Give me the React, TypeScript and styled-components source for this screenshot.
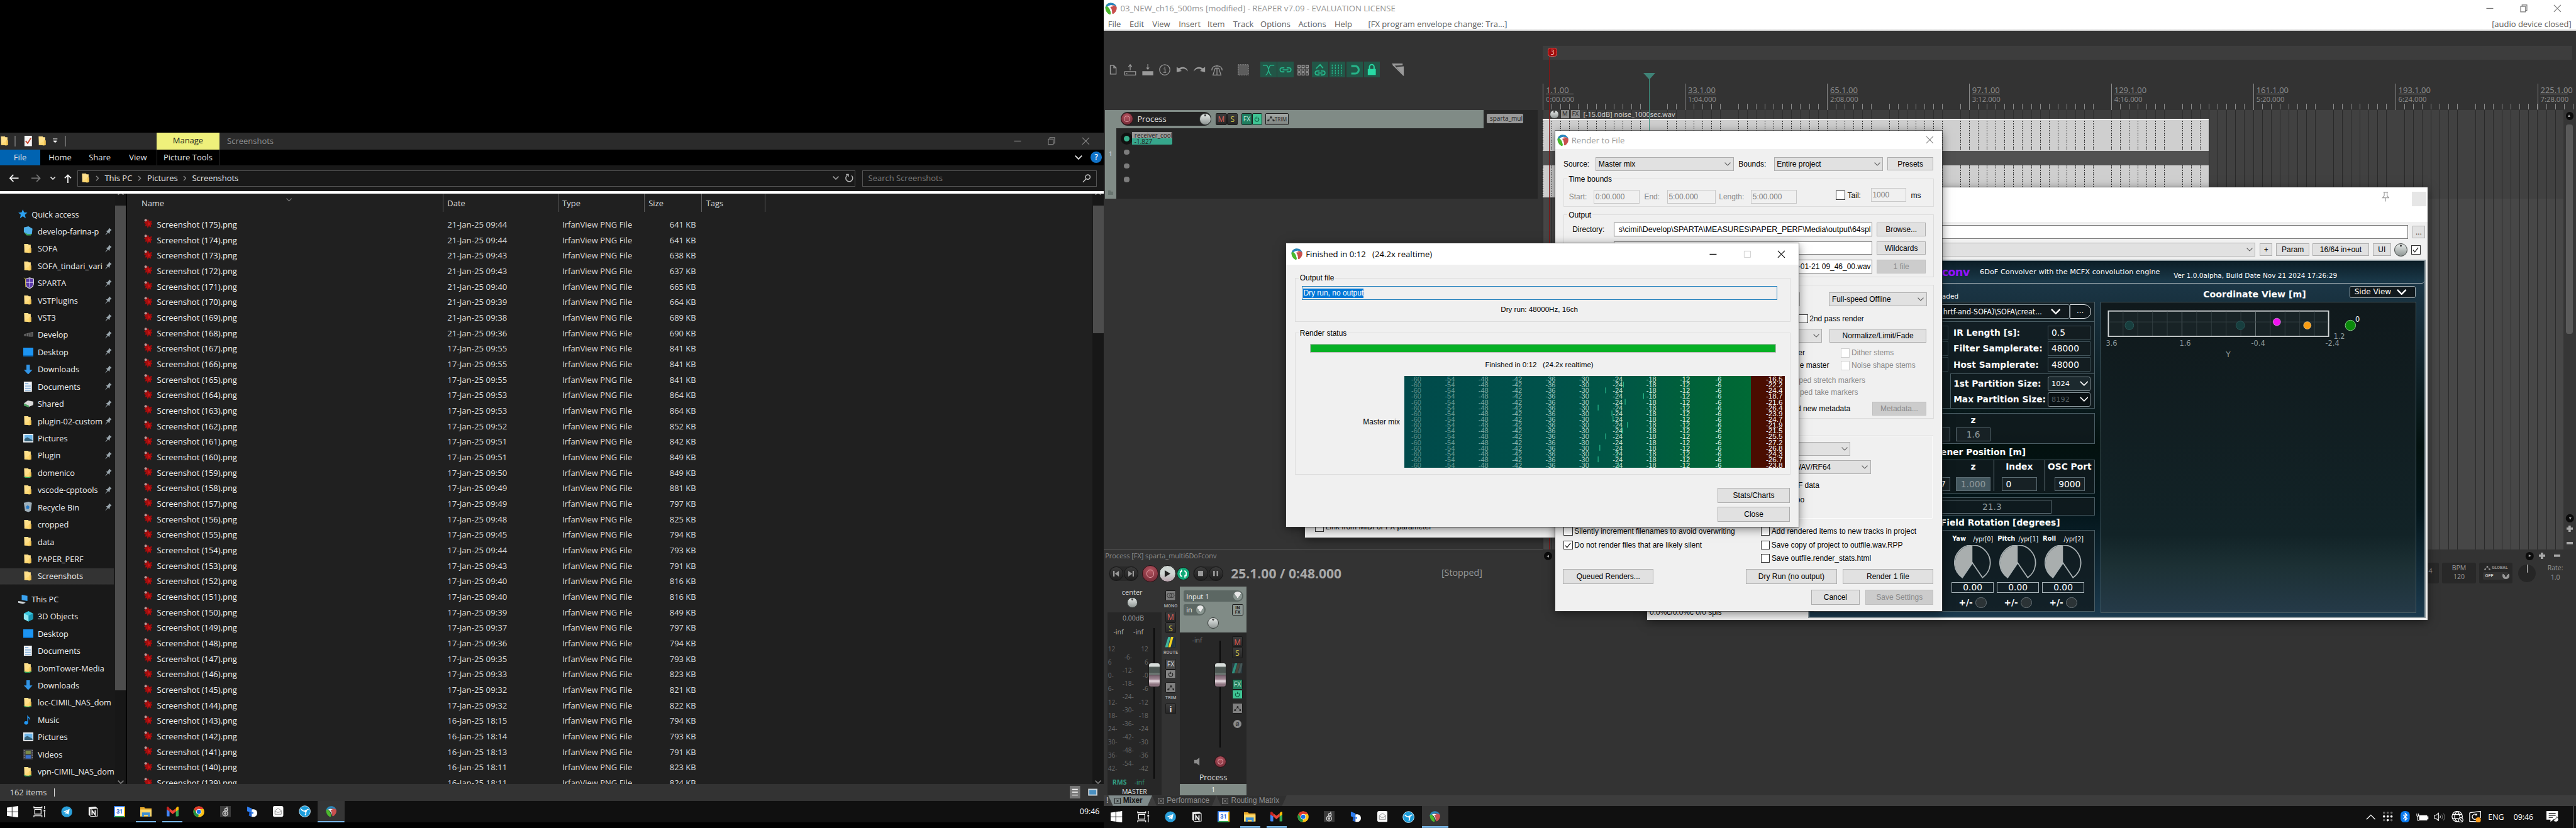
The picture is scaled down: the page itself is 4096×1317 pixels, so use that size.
import React from "react";
import styled, { createGlobalStyle, css } from "styled-components";

/* ---------- shared ---------- */

const Global = createGlobalStyle`
  * { box-sizing: border-box; }
  body { margin: 0; background: #000; overflow: hidden; }
  div, span, svg, button { flex-shrink: 0; }
`;

type Box = { $w?: number; $h?: number; $ml?: number; $mt?: number };
const box = css<Box>`
  ${(p) => p.$w !== undefined && `width: ${p.$w}px;`}
  ${(p) => p.$h !== undefined && `height: ${p.$h}px;`}
  ${(p) => p.$ml !== undefined && `margin-left: ${p.$ml}px;`}
  ${(p) => p.$mt !== undefined && `margin-top: ${p.$mt}px;`}
`;

const Desktop = styled.div`
  position: relative;
  display: flex;
  width: 4480px;
  height: 1440px;
  zoom: 0.9142857;
  overflow: hidden;
  background: #000;
  white-space: nowrap;
  font-family: "Open Sans", "Noto Sans", sans-serif;
  font-size: 14.2px;
`;

const ReaperLogo = ({ s = 20 }: { s?: number }) => (
  <svg width={s} height={s} viewBox="0 0 20 20">
    <path d="M10 .5C4.5.5.5 4.300.6 9.300c.2 4.200 3 8 6.500 10.200 1.400.6 2.400-.4 2.300-1.800C9 13 7.500 9.500 4.200 6.500 4.500 9 5 11.500 6.200 14 3 12 2 9 2.400 6.500z" fill="#3aa53a" />
    <path d="M.6 9C1 4 5 .4 10 .4c4.700 0 8.600 3 9.400 7.600C17 4.800 13 3.800 9.500 4.400 5.500 5 3 7.500 3 11z" fill="#2a86bd" />
    <path d="M1.200 7.500C.2 12 3 17.500 7.500 19.600c1.600.4 2.300-.9 2-2.300C8.800 13.500 7 9.500 3 6z" fill="#4cb82c" />
    <path d="M9.500 5.500c4-1.500 8-.8 9.800 2 .9 4-1.300 8.500-5 11-1.600.9-2.600 0-2.500-1.700.1-4-1-7.500-4-9.800z" fill="#c9504e" />
    <path d="M4.500 6.500c3-2 6.500-1.500 9 .5-2-.5-4-.2-5 .6 2 2 3 5 2.800 9.400C10.500 13 8.500 9 4.500 6.500z" fill="#fff" />
  </svg>
);

/* ---------- window controls ---------- */

const MinIcon = ({ c }: { c: string }) => (
  <svg width="14" height="14" viewBox="0 0 14 14"><path d="M0.500 7h12" stroke={c} strokeWidth="1.300" /></svg>
);
const RestoreIcon = ({ c }: { c: string }) => (
  <svg width="14" height="14" viewBox="0 0 14 14" fill="none" stroke={c} strokeWidth="1.200">
    <path d="M1 3.500h8.500V13H1zM3.500 3.500V1H12v9.500H9.500" />
  </svg>
);
const MaxIcon = ({ c }: { c: string }) => (
  <svg width="14" height="14" viewBox="0 0 14 14" fill="none" stroke={c}><path d="M1.500 1.500h11v11h-11z" /></svg>
);
const CloseIcon = ({ c }: { c: string }) => (
  <svg width="14" height="14" viewBox="0 0 14 14" fill="none" stroke={c} strokeWidth="1.200"><path d="M1 1l12 12M13 1L1 13" /></svg>
);
const Chevron = ({ c = "#444", w = 10, sw = 1.300 }: { c?: string; w?: number; sw?: number }) => (
  <svg width={w} height={w * 0.6} viewBox="0 0 10 6" fill="none" stroke={c} strokeWidth={sw}><path d="M.6.6L5 5 9.400.6" /></svg>
);

/* ---------- taskbar ---------- */

const Bar = styled.div`
  display: flex;
  align-items: stretch;
  height: 38px;
  background: #101010;
  color: #fff;
  font-size: 13.5px;
`;
const TaskItem = styled.div<{ $w?: number; $open?: boolean; $active?: boolean }>`
  width: ${(p) => p.$w ?? 46}px;
  display: flex;
  align-items: center;
  justify-content: center;
  background: ${(p) => (p.$active ? "#353535" : "transparent")};
  background-image: ${(p) => (p.$open || p.$active ? "linear-gradient(#7ab8ea, #7ab8ea)" : "none")};
  background-repeat: no-repeat;
  background-position: bottom center;
  background-size: ${(p) => (p.$active ? "100%" : "35px")} 3px;
`;
const Tray = styled.div`
  display: flex;
  align-items: center;
  margin-left: auto;
`;
const TrayItem = styled.div<{ $w: number }>`
  width: ${(p) => p.$w}px;
  display: flex;
  justify-content: center;
`;
const ShowDesktop = styled.div`
  width: 6px;
  height: 38px;
  margin-left: 9px;
  border-left: 1px solid #777;
`;

const IcoWin = () => (
  <svg width="20" height="20" viewBox="0 0 20 20" fill="#fff"><path d="M0 2.800L8.500 1.600V9.500H0zM9.500 1.500L20 0v9.500H9.500zM0 10.500h8.500v7.900L0 17.200zM9.500 10.500H20V20L9.500 18.500z" /></svg>
);
const IcoTaskView = () => (
  <svg width="22" height="20" viewBox="0 0 22 20" fill="none" stroke="#fff" strokeWidth="1.400">
    <path d="M2.500 6h11v8h-11zM1 .5V3h14V.5M1 19.500V17h14v2.500M19.500 0v5.500M19.500 10v10" /><path d="M18 6.500h3v3h-3z" fill="#fff" stroke="none" />
  </svg>
);
const IcoTelegram = () => (
  <svg width="20" height="20" viewBox="0 0 20 20"><circle cx="10" cy="10" r="9.500" fill="#2ba1dc" /><path d="M4 9.800l11-4.600-1.900 9.800-3.300-2.300-1.700 1.600-.3-2.900L12.500 7.500 6.600 11z" fill="#fff" /></svg>
);
const IcoNotion = () => (
  <svg width="18" height="20" viewBox="0 0 18 20"><path d="M1 2.200L13 1l4 3v14L4.500 19 1 15z" fill="#f4f4f4" /><path d="M4 5.500L16 4.600v12.500l-12 .8z" fill="#161616" /><path d="M7 15.500V8l5.500 7.500V7.500" stroke="#f4f4f4" strokeWidth="2" fill="none" /></svg>
);
const CalBox = styled.div`
  width: 20px;
  height: 20px;
  display: flex;
  align-items: center;
  justify-content: center;
  background: #fff;
  border: 3px solid #3f86ee;
  border-right-color: #f8bc15;
  border-bottom-color: #34a853;
  border-radius: 2px;
  color: #2a6fdb;
  font: bold 10px Roboto, sans-serif;
`;
const IcoExplorer = () => (
  <svg width="20" height="18" viewBox="0 0 20 18"><path d="M0 1h7l1.500 2H20v14H0z" fill="#e8a92a" /><path d="M0 5h20v12H0z" fill="#fcd769" /><path d="M3 10h14v7.500h-3.500v-3h-7v3H3z" fill="#3d8fd4" /></svg>
);
const IcoGmail = () => (
  <svg width="21" height="17" viewBox="0 0 21 17"><path d="M0 2v13.500C0 16.300.7 17 1.500 17H5V5.500z" fill="#4285f4" /><path d="M21 2v13.500c0 .8-.7 1.500-1.500 1.500H16V5.500z" fill="#34a853" /><path d="M16 3v5.500L21 5V2c0-2-2-2.500-3.500-1.300z" fill="#fbbc04" /><path d="M5 8.500V3l5.500 4L16 3v5.500L10.500 13z" fill="#ea4335" /><path d="M0 2v3l5 3.500V3L3.500.7C2-.5 0 0 0 2z" fill="#c5221f" /></svg>
);
const IcoChrome = () => (
  <svg width="20" height="20" viewBox="0 0 20 20"><circle cx="10" cy="10" r="9.500" fill="#fbc116" /><path d="M1.800 5.200A9.500 9.500 0 0 1 18.200 5.200L10 5.700 6 12z" fill="#e33b2e" /><path d="M1.800 5.200L6.500 13 10 14.500 8.800 19.400A9.500 9.500 0 0 1 1.800 5.200z" fill="#229342" /><circle cx="10" cy="10" r="4.700" fill="#fff" /><circle cx="10" cy="10" r="3.700" fill="#1a73e8" /></svg>
);
const IcoSpeaker8 = () => (
  <svg width="19" height="19" viewBox="0 0 19 19"><path d="M0 0h19v19H0z" fill="#3a3a3a" /><g fill="none" stroke="#cfcfcf" strokeWidth="1.600"><circle cx="9" cy="13" r="4.300" /><circle cx="9" cy="13" r="1.300" /><circle cx="10.500" cy="6.500" r="2.300" /><path d="M12 5V1" /></g></svg>
);
const IcoBlueB = () => (
  <svg width="19" height="20" viewBox="0 0 19 20"><path d="M1 1l8 3v8L1 9z" fill="#2c7df0" /><path d="M5 10l4 2v7l-5-2z" fill="#1d5fd0" /><path d="M9 6c6-1 9.500 1.500 9.500 6.500S14 20 9 18.500z" fill="#fff" /><circle cx="10.500" cy="12" r="1.600" fill="#2c7df0" /></svg>
);
const IcoEnvelope = () => (
  <svg width="18" height="19" viewBox="0 0 18 19"><rect width="18" height="19" rx="3" fill="#fafafa" /><path d="M3.500 8L9 4l5.500 4v6.500h-11zM3.500 8l3.500 3h4l3.500-3" fill="none" stroke="#8a8a8a" /></svg>
);
const IcoSync = () => (
  <svg width="21" height="21" viewBox="0 0 21 21"><circle cx="10.500" cy="10.500" r="9.700" fill="#1d9ddb" stroke="#cfeaf8" /><path d="M4 6.500c2.500 3 5 4 8 3.500M17 6.500c-2 1-4 2-5 3.500M11 17c1.500-2 1.800-4.500 1-7" stroke="#fff" strokeWidth="1.800" fill="none" /><circle cx="12" cy="10" r="2" fill="#fff" /></svg>
);

const apps = (
  <>
    <TaskItem $w={44}><IcoWin /></TaskItem>
    <TaskItem $w={49}><IcoTaskView /></TaskItem>
    <TaskItem><IcoTelegram /></TaskItem>
    <TaskItem><IcoNotion /></TaskItem>
    <TaskItem><CalBox>31</CalBox></TaskItem>
    <TaskItem $open><IcoExplorer /></TaskItem>
    <TaskItem $open><IcoGmail /></TaskItem>
    <TaskItem><IcoChrome /></TaskItem>
    <TaskItem><IcoSpeaker8 /></TaskItem>
    <TaskItem><IcoBlueB /></TaskItem>
    <TaskItem><IcoEnvelope /></TaskItem>
    <TaskItem><IcoSync /></TaskItem>
    <TaskItem $active><ReaperLogo s={19} /></TaskItem>
  </>
);

/* ---------- file explorer ---------- */

const LeftMonitor = styled.div`
  width: 1920px;
  height: 1440px;
  padding-top: 231px;
  display: flex;
  flex-direction: column;
`;
const ExTitle = styled.div`
  display: flex;
  align-items: center;
  height: 29px;
  background: #2b2b2b;
  color: #8f8f8f;
`;
const QuickTools = styled.div`
  display: flex;
  align-items: center;
  width: 272px;
`;
const QuickGap = styled.div<{ $w: number }>`
  width: ${(p) => p.$w}px;
`;
const VSep = styled.div<{ $ml: number }>`
  width: 2px;
  height: 18px;
  margin-left: ${(p) => p.$ml}px;
  border: solid #666;
  border-width: 0 1px;
`;
const ManageTab = styled.div`
  width: 110px;
  height: 29px;
  line-height: 27px;
  text-align: center;
  background: #eff07b;
  color: #1c1c1c;
`;
const TitleText = styled.div`
  margin-left: 13px;
`;
const WinButtons = styled.div<{ $gap: number; $mr: number }>`
  display: flex;
  align-items: center;
  margin-left: auto;
  margin-right: ${(p) => p.$mr}px;
  gap: ${(p) => p.$gap}px;
`;
const Ribbon = styled.div`
  display: flex;
  height: 28px;
  line-height: 28px;
  background: #000;
  color: #e4e4e4;
`;
const RibbonTab = styled.div<{ $w: number; $kind?: "file" | "context" }>`
  width: ${(p) => p.$w}px;
  text-align: center;
  background: ${(p) => (p.$kind === "file" ? "#0063b1" : "transparent")};
  border: ${(p) => (p.$kind === "context" ? "solid #2c2c2c" : "none")};
  border-width: 0 1px;
`;
const HelpDot = styled.div`
  width: 19px;
  height: 19px;
  margin: 4px 4px 0 15px;
  border-radius: 50%;
  background: #1173c9;
  color: #fff;
  text-align: center;
  font-size: 13px;
  font-weight: 600;
  line-height: 19px;
`;
const RibbonEnd = styled.div`
  display: flex;
  margin-left: auto;
  svg { margin-top: 10px; }
`;
const NavBar = styled.div`
  display: flex;
  align-items: center;
  height: 45px;
  padding-left: 15px;
  background: #191919;
  color: #e6e6e6;
`;
const NavIcons = styled.div`
  display: flex;
  align-items: center;
  width: 119.5px;
  gap: 16px;
  svg:nth-child(2) { margin-left: 5px; }
  svg:nth-child(4) { margin-left: -1px; }
`;
const Address = styled.div`
  display: flex;
  align-items: center;
  width: 1353px;
  height: 28px;
  padding: 0 2px 1px 5px;
  border: 1px solid #535353;
`;
const Crumb = styled.div<{ $w: number }>`
  display: flex;
  align-items: center;
  width: ${(p) => p.$w}px;
  svg { margin-right: 10px; }
`;
const SearchBox = styled.div`
  display: flex;
  align-items: center;
  justify-content: space-between;
  width: 408px;
  height: 28px;
  margin-left: 12.5px;
  padding: 0 10px 1px 9px;
  border: 1px solid #535353;
  color: #7a7a7a;
`;
const WhiteLine = styled.div`
  height: 3.500px;
  background: #fff;
`;
const ExBody = styled.div`
  display: flex;
  height: 1027.5px;
  overflow: hidden;
`;
const Sidebar = styled.div`
  width: 200px;
  padding-top: 21px;
  background: #191919;
  overflow: hidden;
  font-size: 13.9px;
`;
const SideItem = styled.div<{ $head?: boolean; $sel?: boolean; $mt?: number }>`
  display: flex;
  align-items: center;
  height: 30px;
  margin-top: ${(p) => p.$mt ?? 0}px;
  padding-left: ${(p) => (p.$head ? 32 : 40)}px;
  color: #f1f1f1;
  background: ${(p) => (p.$sel ? "linear-gradient(90deg,#333 198px,transparent 0) 0 1px / 100% 28px no-repeat" : "none")};
`;
const SideIcon = styled.div<{ $head?: boolean }>`
  width: ${(p) => (p.$head ? 23 : 25.5)}px;
  display: flex;
  align-items: center;
`;
const SideLabel = styled.div<{ $full?: boolean }>`
  width: ${(p) => (p.$full ? 134.5 : 117)}px;
`;
const ScrollTrack = styled.div<{ $w: number }>`
  width: ${(p) => p.$w}px;
  display: flex;
  flex-direction: column;
  align-items: center;
  background: #171717;
`;
const ScrollEnd = styled.div<{ $flip?: boolean }>`
  height: 21px;
  padding-top: 6px;
  transform: ${(p) => (p.$flip ? "none" : "scaleY(-1) translateY(4px)")};
`;
const Thumb = styled.div<{ $h: number }>`
  width: 19px;
  height: ${(p) => p.$h}px;
  margin-bottom: auto;
  background: #4d4d4d;
`;
const FilePane = styled.div`
  width: 1679px;
  margin-left: 2px;
  background: #202020;
`;
const ColHeads = styled.div`
  display: flex;
  height: 32px;
  margin-bottom: 8.5px;
  color: #dedede;
`;
const ColHead = styled.div<{ $w: number; $pl: number }>`
  display: flex;
  align-items: center;
  width: ${(p) => p.$w}px;
  padding: 2px 0 0 ${(p) => p.$pl}px;
  border-right: 1px solid #5e5e5e;
`;
const SortMark = styled.div`
  align-self: flex-start;
  margin: -3px 0 0 212px;
`;
const FileRow = styled.div`
  display: flex;
  align-items: center;
  height: 27px;
  padding-left: 28px;
  color: #f4f4f4;
`;
const FileName = styled.div`
  display: flex;
  align-items: center;
  width: 529px;
  svg { margin: -3px 8px 0 0; }
`;
const FileMeta = styled.div<{ $w: number; $right?: boolean; $num?: boolean }>`
  width: ${(p) => p.$w}px;
  text-align: ${(p) => (p.$right ? "right" : "left")};
  color: #dcdcdc;
  font-size: ${(p) => (p.$num ? 14.5 : 14.2)}px;
`;
const StatusBar = styled.div`
  display: flex;
  align-items: center;
  height: 29px;
  padding: 0 10px 0 17px;
  background: #333;
  color: #d8d8d8;
`;
const Caret = styled.div`
  width: 1px;
  height: 14px;
  margin: 0 auto 0 13px;
  background: #ddd;
`;

const Folder = ({ dot }: { dot?: boolean }) => (
  <svg width="16" height="18" viewBox="0 0 16 18">
    <path d="M1.500 1h7l1 1.500h3.500V16h-11z" fill="#ffe08a" /><path d="M10.500 8H14v8l-3.500 1z" fill="#f2c558" /><path d="M1.500 15l9 2V9z" fill="#ffd971" />
    {dot && <path d="M0 14c4 3 10 3 15 0l-3 3.500H3z" fill="#2fa85a" />}
  </svg>
);
const Irfan = () => (
  <svg width="16" height="18" viewBox="0 0 16 18">
    <path d="M3 1l3 2 3-.5 1 3 5-1.500-1.500 4.500L16 10l-3 2 .5 4-4-2-2 3.500L6 13l-3 1 1-4-3-2 2-2z" fill="#a30d0d" />
    <circle cx="4" cy="3.500" r="2.200" fill="#b99" /><path d="M8 6l4 4-3 3z" fill="#d01818" />
  </svg>
);
const Pin = () => (
  <svg width="12" height="14" viewBox="0 0 12 14" fill="#9aa6ad"><path d="M7 .5l4.500 4-2 1L8 8.500 8 11 5.200 8.700 1 13.500.5 13 4 7.800 1.500 5.800 4 5.600 6.300 3z" /></svg>
);
const sideGlyph: Record<string, React.ReactNode> = {
  folder: <Folder />,
  shared: <Folder dot />,
  net: <svg width="18" height="17" viewBox="0 0 18 17"><path d="M1 2l8-2 7 4-1 9-8 1-6-4z" fill="#4fb0ea" /><path d="M1 10c4 3 9 4 14 3l-2 3H6z" fill="#3da45e" /></svg>,
  sparta: <svg width="19" height="20" viewBox="0 0 19 20"><path d="M4 3l7-2 7 2v7c0 5-3 8-7 9.500C7 18 4 15 4 10z" fill="#5b3aa8" stroke="#ddd" strokeWidth="1.200" /><path d="M11 2v16M5 9h12" stroke="#e7e0ff" /><path d="M1 1l3 2v14" stroke="#c8b433" fill="none" /></svg>,
  dev: <svg width="19" height="14" viewBox="0 0 19 14"><path d="M1 6l16-4v8l-3 1-13-2z" fill="#6a6a6a" /><path d="M3 6v4M6 5v5M9 5v6M12 4v7M15 4v7" stroke="#2a2a2a" /></svg>,
  desktop: <svg width="18" height="15" viewBox="0 0 18 15"><path d="M0 0h18v15H0z" fill="#1c94f2" /><path d="M0 13h18v2H0z" fill="#0b6fc4" /></svg>,
  down: <svg width="17" height="17" viewBox="0 0 17 17"><path d="M5.500 0h6v9H16l-7.500 8L1 9h4.500z" fill="#3295e6" /></svg>,
  doc: <svg width="16" height="18" viewBox="0 0 16 18"><path d="M1 0h14v18H1z" fill="#f2f5f8" /><path d="M3 3h6M3 6h10M3 9h10M3 12h10M3 15h10" stroke="#4b8cc7" strokeWidth="1.200" /></svg>,
  drive: <svg width="18" height="14" viewBox="0 0 18 14"><path d="M1 6l7-5 10 2-1 6-7 3z" fill="#d9d9d9" /><path d="M1 6l9 4v3l-9-3z" fill="#4b9f5e" /></svg>,
  pic: <svg width="18" height="15" viewBox="0 0 18 15"><path d="M0 0h18v15H0z" fill="#eef3f7" /><path d="M2 2h14v11H2z" fill="#6db6ea" /><path d="M2 13V9l5-3 9 5v2z" fill="#36617a" /></svg>,
  bin: <svg width="16" height="18" viewBox="0 0 16 18"><path d="M1 2l8-2 6 2-2 14-4 2-6-2z" fill="#9fb0ba" /><path d="M5 8l3-2 3 3-2 4-4-1z" fill="#2879c4" /></svg>,
  pc: <svg width="18" height="17" viewBox="0 0 18 17"><path d="M6 1l10 2v9L6 10z" fill="#3aa2ef" /><path d="M0 12l8 1 5 2-5 2-8-2z" fill="#cfd6da" /></svg>,
  cube: <svg width="18" height="18" viewBox="0 0 18 18"><path d="M9 0l8 4v10l-8 4-8-4V4z" fill="#39c6dc" /><path d="M9 8l8-4v10l-8 4z" fill="#1b97b4" /><path d="M1 4l8 4v10l-8-4z" fill="#8fe6f0" /></svg>,
  music: <svg width="16" height="18" viewBox="0 0 16 18"><path d="M7 0c1 4 6 4 5 10-.5-2-2-4-3.500-4.500V14a3.500 3 0 1 1-1.500-2.500z" fill="#2196f3" /></svg>,
  video: <svg width="17" height="18" viewBox="0 0 17 18"><path d="M0 0h17v18H0z" fill="#3c3c44" /><path d="M4 2h9v6H4z" fill="#7a8a4a" /><path d="M4 10h9v6H4z" fill="#3b6ec8" /><path d="M1.500 1v16M15.500 1v16" stroke="#bbb" strokeDasharray="2 2" /></svg>,
};
const quick: [string, string, boolean?][] = [
  ["net", "develop-farina-p", true], ["folder", "SOFA", true], ["folder", "SOFA_tindari_vari", true], ["sparta", "SPARTA", true],
  ["folder", "VSTPlugins", true], ["folder", "VST3", true], ["dev", "Develop", true], ["desktop", "Desktop", true], ["down", "Downloads", true],
  ["doc", "Documents", true], ["drive", "Shared", true], ["folder", "plugin-02-custom", true], ["pic", "Pictures", true], ["folder", "Plugin", true],
  ["shared", "domenico", true], ["folder", "vscode-cpptools", true], ["bin", "Recycle Bin", true], ["folder", "cropped"], ["folder", "data"],
  ["folder", "PAPER_PERF"], ["folder", "Screenshots"],
];
const thisPc: [string, string][] = [
  ["cube", "3D Objects"], ["desktop", "Desktop"], ["doc", "Documents"], ["shared", "DomTower-Media"], ["down", "Downloads"],
  ["shared", "loc-CIMIL_NAS_dom"], ["music", "Music"], ["pic", "Pictures"], ["video", "Videos"], ["shared", "vpn-CIMIL_NAS_dom"],
];
const times = "21 09:44,21 09:44,21 09:43,21 09:43,21 09:40,21 09:39,21 09:38,21 09:36,17 09:55,17 09:55,17 09:55,17 09:53,17 09:53,17 09:52,17 09:51,17 09:51,17 09:50,17 09:49,17 09:49,17 09:48,17 09:45,17 09:44,17 09:43,17 09:40,17 09:40,17 09:39,17 09:37,17 09:36,17 09:35,17 09:33,17 09:32,17 09:32,16 18:15,16 18:14,16 18:13,16 18:11,16 18:11".split(",");
const sizes = [641, 641, 638, 637, 665, 664, 689, 690, 841, 841, 841, 864, 864, 852, 842, 849, 849, 881, 797, 825, 794, 793, 791, 816, 816, 849, 797, 794, 793, 823, 821, 822, 794, 793, 791, 823, 824];

const CrumbArrow = () => (
  <svg width="6" height="10" viewBox="0 0 6 10" fill="none" stroke="#8a8a8a" strokeWidth="1.500"><path d="M1 1l4 4-4 4" /></svg>
);

const Explorer = () => (
  <LeftMonitor>
    <ExTitle>
      <QuickTools>
        <Folder /><VSep $ml={9} /><QuickGap $w={14} />
        <svg width="15" height="18" viewBox="0 0 15 18"><path d="M1 0h13v18H1z" fill="#f5f5f5" /><path d="M3 9l3.500 4L12 4" stroke="#c8442a" strokeWidth="2" fill="none" /></svg>
        <QuickGap $w={10} /><Folder /><QuickGap $w={10} />
        <svg width="8" height="9" viewBox="0 0 8 9"><path d="M0 1h8M1 4.500l3 3 3-3z" fill="#fff" stroke="#fff" strokeWidth="1" /></svg>
        <VSep $ml={13} />
      </QuickTools>
      <ManageTab>Manage</ManageTab>
      <TitleText>Screenshots</TitleText>
      <WinButtons $gap={45} $mr={25}><MinIcon c="#8a8a8a" /><RestoreIcon c="#8a8a8a" /><CloseIcon c="#8a8a8a" /></WinButtons>
    </ExTitle>
    <Ribbon>
      <RibbonTab $w={70} $kind="file">File</RibbonTab>
      <RibbonTab $w={69}>Home</RibbonTab>
      <RibbonTab $w={69}>Share</RibbonTab>
      <RibbonTab $w={64}>View</RibbonTab>
      <RibbonTab $w={110} $kind="context">Picture Tools</RibbonTab>
      <RibbonEnd><Chevron c="#ddd" w={13} sw={1.500} /><HelpDot>?</HelpDot></RibbonEnd>
    </Ribbon>
    <NavBar>
      <NavIcons>
        <svg width="18" height="14" viewBox="0 0 18 14" fill="none" stroke="#fff" strokeWidth="1.800"><path d="M17 7H2M8 1L2 7l6 6" /></svg>
        <svg width="18" height="14" viewBox="0 0 18 14" fill="none" stroke="#777" strokeWidth="1.800"><path d="M1 7h15M10 1l6 6-6 6" /></svg>
        <Chevron c="#ddd" w={9} sw={2} />
        <svg width="13" height="16" viewBox="0 0 13 16" fill="none" stroke="#fff" strokeWidth="1.800"><path d="M6.500 16V2M1 7l5.500-5.500L12 7" /></svg>
      </NavIcons>
      <Address>
        <Crumb $w={25.5}><Folder /></Crumb>
        <Crumb $w={74}><CrumbArrow />This PC</Crumb>
        <Crumb $w={78}><CrumbArrow />Pictures</Crumb>
        <Crumb $w={96}><CrumbArrow />Screenshots</Crumb>
        <WinButtons $gap={9} $mr={0}>
          <Chevron c="#9a9a9a" w={11} sw={1.600} />
          <svg width="16" height="16" viewBox="0 0 16 16" fill="none" stroke="#b5b5b5" strokeWidth="1.600"><path d="M12 3.500A6 6 0 1 1 5 2.800M2.500 1.500h4v4" /></svg>
        </WinButtons>
      </Address>
      <SearchBox>
        Search Screenshots
        <svg width="15" height="15" viewBox="0 0 15 15" fill="none" stroke="#c4c4c4" strokeWidth="1.600"><circle cx="9.500" cy="5" r="4" /><path d="M6.800 8L1 14" /></svg>
      </SearchBox>
    </NavBar>
    <WhiteLine />
    <ExBody>
      <Sidebar>
        <SideItem $head><SideIcon $head><svg width="16" height="16" viewBox="0 0 16 16"><path d="M8 0l2.200 5.300 5.800.4-4.400 3.700L13 15.500 8 12l-5 3.500 1.400-6.100L0 5.700l5.800-.4z" fill="#2ba0f0" /></svg></SideIcon>Quick access</SideItem>
        {quick.map(([i, t, p]) => (
          <SideItem key={t} $sel={t === "Screenshots"}>
            <SideIcon>{sideGlyph[i]}</SideIcon><SideLabel>{t}</SideLabel>{p && <Pin />}
          </SideItem>
        ))}
        <SideItem $head $mt={10}><SideIcon $head>{sideGlyph.pc}</SideIcon>This PC</SideItem>
        {thisPc.map(([i, t]) => (
          <SideItem key={t}><SideIcon>{sideGlyph[i]}</SideIcon><SideLabel $full>{t}</SideLabel></SideItem>
        ))}
      </Sidebar>
      <ScrollTrack $w={19}>
        <ScrollEnd><Chevron c="#7a7a7a" w={11} sw={1.800} /></ScrollEnd>
        <Thumb $h={844} />
        <ScrollEnd $flip><Chevron c="#7a7a7a" w={11} sw={1.800} /></ScrollEnd>
      </ScrollTrack>
      <FilePane>
        <ColHeads>
          <ColHead $w={550} $pl={25}>Name<SortMark><Chevron c="#7a7a7a" w={10} /></SortMark></ColHead>
          <ColHead $w={200} $pl={7}>Date</ColHead>
          <ColHead $w={150} $pl={7}>Type</ColHead>
          <ColHead $w={100} $pl={7}>Size</ColHead>
          <ColHead $w={110} $pl={7}>Tags</ColHead>
        </ColHeads>
        {sizes.map((kb, i) => {
          const [d, t] = times[i].split(" ");
          return (
            <FileRow key={i}>
              <FileName><Irfan />Screenshot ({175 - i}).png</FileName>
              <FileMeta $w={200} $num>{d}-Jan-25 {t}</FileMeta>
              <FileMeta $w={150}>IrfanView PNG File</FileMeta>
              <FileMeta $w={82.5} $right>{kb} KB</FileMeta>
            </FileRow>
          );
        })}
      </FilePane>
      <ScrollTrack $w={20}>
        <ScrollEnd><Chevron c="#7a7a7a" w={11} sw={1.800} /></ScrollEnd>
        <Thumb $h={222} />
        <ScrollEnd $flip><Chevron c="#7a7a7a" w={11} sw={1.800} /></ScrollEnd>
      </ScrollTrack>
    </ExBody>
    <StatusBar>
      162 items<Caret />
      <svg width="50" height="22" viewBox="0 0 50 22"><path d="M0 0h18v22H0z" fill="#777" /><path d="M4 6h10M4 11h10M4 16h10" stroke="#fff" strokeWidth="1.500" /><path d="M32 5h16v12H32z" fill="#cfd6da" /><path d="M34 7h12v8H34z" fill="#4a8fc0" /></svg>
    </StatusBar>
    <Bar>{apps}<Tray><TrayItem $w={50}>09:46</TrayItem></Tray></Bar>
  </LeftMonitor>
);

/* ---------- REAPER main window ---------- */

const RightMonitor = styled.div`
  width: 2560px;
  height: 1440px;
  background: #333;
  color: #999;
`;
const RTitle = styled.div`
  display: flex;
  align-items: center;
  height: 29px;
  padding-left: 2px;
  background: #fff;
  color: #939393;
  font-size: 14.4px;
`;
const RTitleText = styled.div`margin-left: 5.5px;`;
const RMenu = styled.div`
  display: flex;
  height: 25px;
  line-height: 25px;
  padding-left: 7px;
  background: #fff;
  border-bottom: 3px solid #e9e9e9;
  border-image: linear-gradient(#f4f4f4, #d0d0d0) 1;
  color: #5c5c5c;
`;
const MenuItem = styled.div<{ $w: number }>`width: ${(p) => p.$w}px;`;
const AudioNote = styled.div`
  margin: 0 8px 0 auto;
`;
const RTop = styled.div`
  display: flex;
  height: 902px;
`;
const TcpColumn = styled.div`
  width: 763.5px;
  border-bottom: 1px solid #585858;
`;
const Toolbar = styled.div`
  display: flex;
  align-items: center;
  height: 28px;
  margin-top: 53px;
  padding-left: 2px;
  gap: 2px;
`;
const Tool = styled.div<{ $on?: boolean; $ml?: number }>`
  display: flex;
  align-items: center;
  justify-content: center;
  width: 28px;
  height: 28px;
  margin-left: ${(p) => p.$ml ?? 0}px;
  background: ${(p) => (p.$on ? "#225647" : "transparent")};
  color: ${(p) => (p.$on ? "#27b489" : "#9a9a9a")};
`;
const toolSvg = (d: string, fill = false, sw = 1.400) => (
  <svg width="22" height="22" viewBox="0 0 22 22" fill={fill ? "currentColor" : "none"} stroke="currentColor" strokeWidth={fill ? 0 : sw}><path d={d} /></svg>
);
const TrackPanel = styled.div`
  display: flex;
  height: 154.5px;
  margin: 56px 9px 0 2px;
  background: #262626;
`;
const TrackEdge = styled.div`
  width: 19px;
  display: flex;
  flex-direction: column;
  align-items: center;
  padding-top: 67px;
  background: #808b86;
  color: #e8e8e8;
  font-size: 10px;
  line-height: 20px;
  svg { margin-top: 53px; }
`;
const TrackMain = styled.div`width: 639px;`;
const TrackBar = styled.div`
  display: flex;
  align-items: center;
  height: 32px;
  padding-left: 8px;
  background: #808b86;
`;
const NamePill = styled.div`
  display: flex;
  align-items: center;
  width: 158px;
  height: 24px;
  border-radius: 12px;
  background: #232323;
  color: #e6e6e6;
  font-size: 14px;
`;
const NameText = styled.div`width: 108px; margin-left: 7px;`;
const RecDot = styled.div<{ $s: number }>`
  width: ${(p) => p.$s}px;
  height: ${(p) => p.$s}px;
  display: flex;
  align-items: center;
  justify-content: center;
  border-radius: 50%;
  background: radial-gradient(circle at 50% 30%, #b45560, #7c2f3b 75%);
  border: 1px solid #2a1216;
  &::after {
    content: "";
    width: 42%;
    height: 42%;
    border-radius: 50%;
    border: 2px solid #e2a0a8;
  }
`;
const Knob = styled.div<{ $s: number }>`
  width: ${(p) => p.$s}px;
  height: ${(p) => p.$s}px;
  border-radius: 50%;
  background: radial-gradient(circle at 50% 15%, #444 0 1.500px, transparent 2px), linear-gradient(#e8ecea, #8f9694);
  border: 1px solid #3a3f3d;
`;
const Mini = styled.div<{ $bg?: string; $c?: string; $fs?: number } & Box>`
  ${box}
  display: flex;
  align-items: center;
  justify-content: center;
  border: 1px solid #1a1a1a;
  border-radius: 2px;
  background: ${(p) => p.$bg ?? "linear-gradient(#3c3c3c, #262626)"};
  color: ${(p) => p.$c ?? "#ccc"};
  font: ${(p) => p.$fs ?? 13}px "Open Sans", sans-serif;
`;
const ParamRow = styled.div`
  display: flex;
  align-items: center;
  height: 22px;
  margin: 7px 0 0 8px;
`;
const ParamKnob = styled.div`
  width: 21px;
  height: 21px;
  border-radius: 50%;
  border: 6px solid #111;
  background: #38b08c;
`;
const ParamLabel = styled.div`
  width: 70px;
  margin-left: -1px;
  padding-left: 4px;
  background: linear-gradient(#999 50%, #36a78c 50%);
  color: #222;
  font-size: 10.8px;
  line-height: 11px;
  border-radius: 0 2px 2px 0;
`;
const SendDots = styled.div`
  display: flex;
  flex-direction: column;
  gap: 15px;
  margin: 8px 0 0 14px;
`;
const SendDot = styled.div`
  width: 9px;
  height: 9px;
  border-radius: 50%;
  background: #7c7c7c;
`;
const SpartaTag = styled.div`
  width: 63px;
  height: 17px;
  margin: 6.5px 0 0 6px;
  padding-left: 5px;
  border-radius: 2px;
  background: #999;
  color: #222;
  font-size: 11px;
  line-height: 16px;
`;
const Arrange = styled.div`
  position: relative;
  width: 1796.5px;
`;
const MarkerLane = styled.div`
  width: 1790px;
  height: 24px;
  margin-top: 26px;
  padding: 3px 0 0 8.5px;
  background: #3d3d3d;
`;
const Marker = styled.div`
  width: 16px;
  height: 16px;
  border: 1px solid #e05b5b;
  border-radius: 5px;
  background: #a10b0b;
  color: #ffd0d0;
  text-align: center;
  font-size: 11px;
  line-height: 14px;
`;
const Ruler = styled.div`
  display: flex;
  width: 1796.5px;
  height: 46px;
  margin-top: 41px;
  overflow: hidden;
  background: repeating-linear-gradient(90deg, #8a8a8a 0 1px, transparent 1px 15.444px) 0 36px / 100% 10px no-repeat;
`;
const RulerMark = styled.div`
  width: 247.1px;
  padding-left: 4px;
  border-left: 1px solid #8a8a8a;
  color: #8e8e8e;
`;
const BarNo = styled.div`
  width: 48px;
  height: 19px;
  border-bottom: 1px solid #8a8a8a;
  font-size: 14.2px;
  line-height: 22px;
`;
const BarTime = styled.div`
  font-size: 12.4px;
  line-height: 17px;
`;
const GridArea = styled.div`
  width: 1774.5px;
  height: 765px;
  background: repeating-linear-gradient(90deg, #2a2a2a 0 1px, transparent 1px 15.444px), linear-gradient(#414141 154px, #474747 0);
`;
const MediaItem = styled.div`
  width: 1158px;
  height: 153px;
  background: repeating-linear-gradient(90deg, #2f2f2f 0 1px, transparent 1px 15.444px), #3e3e3e;
`;
const ItemLabel = styled.div`
  display: flex;
  align-items: center;
  height: 16px;
  padding-left: 12px;
  color: #d8d8d8;
  font-size: 12px;
`;
const ItemTag = styled.div`
  height: 14px;
  margin-left: 3.5px;
  padding: 0 2px;
  background: #8b8b8b;
  color: #222;
  font-size: 10.5px;
  line-height: 14px;
`;
const ItemName = styled.div`margin-left: 6px;`;
const Wave = styled.div<{ $top?: boolean }>`
  height: 56px;
  border-top: ${(p) => (p.$top ? "3px solid #fff" : "none")};
  background:
    repeating-linear-gradient(0deg, #cfcfcf 0 2px, transparent 2px 4px),
    repeating-linear-gradient(90deg, #333 0 1px, transparent 1px 15.444px),
    #cfcfcf;
`;
const WaveGap = styled.div`
  height: 25px;
  background: #515151;
`;
const PlayLine = styled.div`
  position: absolute;
  left: 10px;
  top: 46px;
  width: 1.500px;
  height: 856px;
  background: #8c1212;
`;
const EditCursor = styled.div`
  position: absolute;
  left: 174.5px;
  top: 73px;
  width: 21px;
  height: 830px;
  background: linear-gradient(#3d9583, #3d9583) 10px 0 / 1.200px 100% no-repeat;
  &::before {
    content: "";
    display: block;
    border: 10.500px solid transparent;
    border-top: 11px solid #3f8377;
    border-bottom: 0;
  }
`;
const VScroll = styled.div`
  position: absolute;
  right: 0;
  top: 137px;
  width: 22px;
  height: 765px;
  padding-bottom: 6px;
  display: flex;
  flex-direction: column;
  align-items: center;
  background: #363636;
`;
const ArrowBtn = styled.div<{ $rot: number; $mt?: number; $ml?: number }>`
  width: 14px;
  height: 14px;
  margin: ${(p) => p.$mt ?? 0}px 0 0 ${(p) => p.$ml ?? 0}px;
  padding: 4px 0 0 4px;
  border-radius: 50%;
  background: #0c0c0c;
  transform: rotate(${(p) => p.$rot}deg);
  &::before {
    content: "";
    display: block;
    width: 0;
    border: 3px solid transparent;
    border-bottom: 5px solid #a8a8a8;
    border-top: 0;
  }
`;
const VThumb = styled.div`
  width: 12px;
  height: 364px;
  margin: 8px 0 auto;
  border-radius: 4px;
  background: #5a5a5a;
`;
const PlusMinus = styled.div<{ $plus?: boolean; $ml?: number; $mt?: number }>`
  width: 11px;
  height: 11px;
  margin: ${(p) => p.$mt ?? 0}px 0 0 ${(p) => p.$ml ?? 0}px;
  background:
    linear-gradient(#aaa, #aaa) center / 11px 4px no-repeat,
    linear-gradient(#aaa, #aaa) center / ${(p) => (p.$plus ? "4px 11px" : "0 0")} no-repeat;
`;

const RBottom = styled.div`
  display: flex;
  height: 428px;
`;
const MixSide = styled.div`width: 763.5px;`;
const FocusedFx = styled.div`
  height: 22px;
  padding-left: 2px;
  color: #8d8d8d;
  font-size: 11.900px;
  line-height: 22px;
`;
const Transport = styled.div`
  display: flex;
  align-items: center;
  height: 42px;
  padding: 0 0 2px 8px;
`;
const BtnGroup = styled.div`
  display: flex;
  align-items: center;
  height: 26px;
  border-radius: 13px;
  background: #292929;
`;
const TBtn = styled.div<{ $s: number; $bg?: string }>`
  display: flex;
  align-items: center;
  justify-content: center;
  width: ${(p) => p.$s}px;
  height: ${(p) => p.$s}px;
  margin-left: 1px;
  border: 1.500px solid #171717;
  border-radius: 50%;
  background: ${(p) => p.$bg ?? "linear-gradient(#3a3a3a, #1f1f1f)"};
`;
const TBtnGap = styled.div`width: 6px;`;
const BigTime = styled.div`
  width: 366px;
  margin-left: 14px;
  color: #a9a9a9;
  font-size: 23px;
  font-weight: bold;
  line-height: 30px;
`;
const Stopped = styled.div`
  font-size: 15.6px;
  margin-bottom: 4px;
`;
const Mixer = styled.div`
  display: flex;
  height: 364px;
  padding-left: 6px;
  font-size: 12px;
`;
const MasterStrip = styled.div`
  width: 94px;
  color: #d6d6d6;
`;
const MasterPan = styled.div`
  display: flex;
  flex-direction: column;
  align-items: center;
  height: 45px;
  padding: 2px 8px 0 0;
  line-height: 17px;
`;
const MeterPanel = styled.div`
  height: 319px;
  padding-top: 3px;
  background: #272727;
  text-align: center;
`;
const DbRow = styled.div`
  padding-right: 4px;
  color: #9d9d9d;
  font-size: 11.500px;
  line-height: 17px;
`;
const MeterCols = styled.div`
  display: flex;
  height: 267px;
`;
const MeterMain = styled.div`width: 71px;`;
const MeterHead = styled.div`height: 33px; padding-top: 4px;`;
const RmsRow = styled.div`width: 71px; height: 16px; margin-top: -1px;`;
const InfRow = styled.div<{ $green?: boolean }>`
  display: flex;
  justify-content: space-around;
  height: 20px;
  padding: 0 0 0 2px;
  color: ${(p) => (p.$green ? "#329c7f" : "#b5b5b5")};
  font-size: 11.500px;
  line-height: 20px;
`;
const Scales = styled.div`
  display: flex;
  justify-content: space-between;
  height: 237px;
  color: #676767;
  font-size: 11px;
`;
const ScaleCol = styled.div<{ $mt?: number; $align: string }>`
  display: flex;
  flex-direction: column;
  margin-top: ${(p) => p.$mt ?? 0}px;
  padding-left: 1px;
  text-align: ${(p) => p.$align};
  line-height: 23.1px;
`;
const FaderSlot = styled.div<{ $h: number; $cap: number; $ml?: number; $mt?: number }>`
  display: flex;
  justify-content: center;
  width: 21px;
  height: ${(p) => p.$h}px;
  margin: ${(p) => p.$mt ?? 0}px 0 0 ${(p) => p.$ml ?? 0}px;
  padding-top: ${(p) => p.$cap}px;
  background: linear-gradient(#0a0a0a, #0a0a0a) center / 2.500px 100% no-repeat;
`;
const FaderCap = styled.div`
  width: 20px;
  height: 43px;
  border-radius: 5px;
  border: 1px solid #1a1a1a;
  background: linear-gradient(#d8dedb 0 12%, #4d5753 18% 40%, #8b9591 48%, #333 50%, #7a6470 53%, #9c8390 68%, #e8dce2 76%, #8d7480 90%);
`;
const MasterName = styled.div`
  color: #e2e2e2;
  font-size: 11.500px;
  line-height: 20px;
`;
const BtnColumn = styled.div<{ $w: number; $pt: number }>`
  display: flex;
  flex-direction: column;
  align-items: center;
  width: ${(p) => p.$w}px;
  padding-top: ${(p) => p.$pt}px;
`;
const TinyLabel = styled.div`
  height: 18px;
  color: #a9a9a9;
  font: 600 8px Roboto, sans-serif;
  line-height: 18px;
`;
const TrackStrip = styled.div`
  width: 116px;
  background: #272727;
`;
const StripTop = styled.div`
  height: 80px;
  padding: 7px 6px 0;
  background: #808b86;
`;
const InSelect = styled.div<{ $w: number }>`
  display: flex;
  align-items: center;
  justify-content: space-between;
  width: ${(p) => p.$w}px;
  height: 20px;
  padding: 0 2px 0 5px;
  border-radius: 3px 10px 10px 3px;
  background: #5c6763;
  color: #f0f0f0;
  font-size: 12px;
  &::after {
    content: "";
    width: 15px;
    height: 15px;
    border-radius: 50%;
    background: conic-gradient(from -35deg at 50% 75%, #e8e8e8 0 70deg, #8a9691 0);
  }
`;
const StripRow = styled.div<Box>`
  ${box}
  display: flex;
  align-items: center;
`;
const StripBody = styled.div`
  display: flex;
  height: 206px;
`;
const InfCell = styled.div`
  width: 30px;
  margin-left: 15px;
  padding-top: 6px;
  color: #777;
  text-align: center;
  font-size: 11.500px;
`;
const InFx = styled.div`font: 700 8px/8px Roboto, sans-serif; text-align: center;`;
const Phase = styled.div`
  width: 15px;
  height: 15px;
  margin-top: 10px;
  border-radius: 50%;
  background: #8a8a8a;
  color: #222;
  font-size: 11px;
  line-height: 14px;
  text-align: center;
`;
const StripFoot = styled.div`
  display: flex;
  align-items: center;
  height: 38px;
  padding-left: 24px;
  gap: 24px;
`;
const StripName = styled.div`
  height: 20px;
  color: #e2e2e2;
  text-align: center;
  font-size: 13.5px;
  line-height: 18px;
`;
const StripNo = styled.div`
  height: 20px;
  background: #808b86;
  color: #f4f4f4;
  text-align: center;
  line-height: 20px;
`;
const TabBar = styled.div`
  display: flex;
  align-items: stretch;
  height: 18px;
  background: #3d3d3d;
  padding-left: 4px;
  color: #ddd;
  font: 13px "Liberation Sans", Arial, sans-serif;
  line-height: 18px;
`;
const DockTab = styled.div<{ $w: number; $on?: boolean }>`
  display: flex;
  align-items: center;
  gap: 4.5px;
  width: ${(p) => p.$w}px;
  padding-left: 10px;
  clip-path: polygon(0 0, 100% 0, calc(100% - 8px) 100%, 8px 100%);
  background: ${(p) => (p.$on ? "#808b8b" : "#303030")};
  color: ${(p) => (p.$on ? "#161616" : "#8f8f8f")};
`;
const XBox = () => (
  <svg width="11" height="11" viewBox="0 0 11 11" fill="none" stroke="currentColor"><path d="M.5.5h10v10H.5zM3 3l5 5M8 3L3 8" /></svg>
);

const RightTransport = styled.div`
  display: flex;
  flex-direction: column;
  align-items: flex-end;
  width: 1796.5px;
  padding-top: 1px;
`;
const HScrollRow = styled.div`
  display: flex;
  align-items: center;
  width: 100%;
  height: 20px;
  padding: 0 27.5px 0 1px;
`;
const PushRight = styled.div`margin-left: auto;`;
const RateRow = styled.div`
  display: flex;
  height: 36px;
  margin-top: 2px;
  padding-right: 16px;
  font-size: 11.500px;
`;
const Plate = styled.div<{ $w: number }>`
  width: ${(p) => p.$w}px;
  margin-left: 6px;
  padding-top: 2px;
  border-radius: 3px;
  background: #282828;
  text-align: center;
  line-height: 15px;
`;
const PlateSig = styled.div`padding: 6px 10px 0 0; text-align: right; letter-spacing: 1px;`;
const PlateTiny = styled.div`
  display: flex;
  align-items: center;
  justify-content: center;
  gap: 2px;
  font: 600 7.5px Roboto, sans-serif;
  line-height: 14px;
`;
const OffPill = styled.div`
  display: flex;
  align-items: center;
  justify-content: space-between;
  height: 13px;
  margin: 0 5px 0 6px;
  padding: 0 1px 0 4px;
  border-radius: 3px 7px 7px 3px;
  background: #333;
  color: #ccc;
  font: 600 8px Roboto, sans-serif;
  &::after {
    content: "";
    width: 12px;
    height: 12px;
    border-radius: 50%;
    background: conic-gradient(from -40deg at 50% 70%, #333 0 80deg, #999 0);
  }
`;
const RateKnob = styled.div`
  width: 31px;
  height: 31px;
  margin: 3px 0 0 9.5px;
  border-radius: 50%;
  background: linear-gradient(#ddd, #ddd) center 0 / 1px 14px no-repeat, #262626;
`;
const RateText = styled.div`
  width: 40px;
  margin-left: 13.5px;
  text-align: center;
  line-height: 17px;
  padding-top: 1px;
`;

const Envelope = ({ s = 14 }: { s?: number }) => (
  <svg width={s} height={s * 0.7} viewBox="0 0 14 10" fill="currentColor" stroke="currentColor"><path d="M2 8l5-6 5 6" fill="none" /><circle cx="2" cy="8" r="1.500" /><circle cx="7" cy="2" r="1.500" /><circle cx="12" cy="8" r="1.500" /></svg>
);
const Power = ({ s = 10 }: { s?: number }) => (
  <svg width={s} height={s} viewBox="0 0 10 10" fill="none" stroke="currentColor" strokeWidth="1.300"><path d="M3 2.500a3.500 3.500 0 1 0 4 0M5 .5v4" /></svg>
);
const Route = ({ dim }: { dim?: boolean }) => (
  <svg width="18" height="18" viewBox="0 0 18 18"><path d="M0 0h18v18H0z" fill="#2b3a3f" /><path d="M5 0h4L4 18H0v-2z" fill={dim ? "#2f8f7c" : "#3fb59d"} /><path d="M10 0h4L9 18H5z" fill={dim ? "#4c4438" : "#f4d320"} /><path d="M15 0h3v3l-4 15h-4z" fill={dim ? "#455" : "#234"} /></svg>
);

const vols = ["12", "6", "0-", "6-", "12-", "18-", "24-", "30-", "36-", "42-"];
const volsR = ["12", "6", "-0", "-6", "-12", "-18", "-24", "-30", "-36", "-42"];
const mids = ["-6-", "-12-", "-18-", "-24-", "-30-", "-36-", "-42-", "-48-", "-54-"];
const marks = [["1.1.00", "0:00.000"], ["33.1.00", "1:04.000"], ["65.1.00", "2:08.000"], ["97.1.00", "3:12.000"], ["129.1.00", "4:16.000"], ["161.1.00", "5:20.000"], ["193.1.00", "6:24.000"], ["225.1.00", "7:28.000"]];

const Reaper = () => (
  <RightMonitor>
    <RTitle>
      <ReaperLogo s={21} /><RTitleText>03_NEW_ch16_500ms [modified] - REAPER v7.09 - EVALUATION LICENSE</RTitleText>
      <WinButtons $gap={44.5} $mr={25}><MinIcon c="#777" /><RestoreIcon c="#777" /><CloseIcon c="#777" /></WinButtons>
    </RTitle>
    <RMenu>
      <MenuItem $w={37.5}>File</MenuItem><MenuItem $w={39.5}>Edit</MenuItem><MenuItem $w={46}>View</MenuItem><MenuItem $w={50}>Insert</MenuItem>
      <MenuItem $w={44.5}>Item</MenuItem><MenuItem $w={47.5}>Track</MenuItem><MenuItem $w={66}>Options</MenuItem><MenuItem $w={63}>Actions</MenuItem>
      <MenuItem $w={58.5}>Help</MenuItem><div>[FX program envelope change: Tra...]</div>
      <AudioNote>[audio device closed]</AudioNote>
    </RMenu>
    <RTop>
      <TcpColumn>
        <Toolbar>
          <Tool>{toolSvg("M6 3.500h6l4 4v11H6zM12 3.500v4h4")}</Tool>
          <Tool>{toolSvg("M1.500 14h19v6h-19zM4 17h2M11 12V3M8 6l3-4 3 4")}</Tool>
          <Tool>{toolSvg("M1.500 13.500h19v7h-19zM10.400 1h1.200v6h2.400l-3 4-3-4h2.400z", true)}</Tool>
          <Tool>{toolSvg("M11 2a9 9 0 1 1 0 18 9 9 0 0 1 0-18zM9 9.500h2.500V15M8.500 15.500h5M11 6v1.500")}</Tool>
          <Tool>{toolSvg("M1 6v9l9-2-3-2c4-3 9-3 14 3-2-7-9-10-16-5.500z", true)}</Tool>
          <Tool>{toolSvg("M21 6v9l-9-2 3-2C11 8 6 8 1 14 3 7 10 4 17 8.500z", true)}</Tool>
          <Tool>{toolSvg("M8 8h6l4 12H4zM11 8v12M11 4v2M9.500 4h3M2 12c0-5 4-8 9-8s9 3 9 8")}</Tool>
          <Tool $ml={17}><svg width="22" height="22" viewBox="0 0 22 22"><path d="M2 2h18v18H2z" fill="#5c5c5c" stroke="#aaa" strokeDasharray="1.500 1.500" /></svg></Tool>
          <Tool $on $ml={13}>{toolSvg("M1 3h6c5 0 3 17 9 17M21 3h-6C10 3 12 20 6 20")}</Tool>
          <Tool $on>{toolSvg("M9 7.500H5a3.500 3.500 0 0 0 0 7h4M13 7.500h4a3.500 3.500 0 0 1 0 7h-4M6 11h10", false, 2)}</Tool>
          <Tool>{toolSvg("M2 3h4v4H2zM9 3h4v4H9zM16 3h4v4h-4zM2 9.500h4v4H2zM9 9.500h4v4H9zM16 9.500h4v4h-4zM2 16h4v4H2zM9 16h4v4H9zM16 16h4v4h-4z")}</Tool>
          <Tool $on>{toolSvg("M4 9l7-7 5 6M10 13H6a3 3 0 0 0 0 7h4M12 13h4a3 3 0 0 1 0 7h-4M7 16.500h8", false, 2)}</Tool>
          <Tool $on><svg width="22" height="22" viewBox="0 0 22 22" stroke="currentColor" strokeDasharray="3 1.500" strokeWidth="1.500"><path d="M2.500 2v19M8 2v19M13.500 2v19M19 2v19" /></svg></Tool>
          <Tool $on>{toolSvg("M5 4.500h7a6 6.500 0 0 1 0 13H5", false, 3.400)}</Tool>
          <Tool $on><svg width="18" height="22" viewBox="0 0 18 22" fill="none"><path d="M5 10V6a4 4 0 0 1 8 0v4" stroke="#28dba4" strokeWidth="2.200" /><path d="M2 9.500h14V20H2z" fill="#28dba4" /></svg></Tool>
          <Tool $ml={15}><svg width="24" height="24" viewBox="0 0 24 24"><path d="M1 1h19v3L4 5zM9 7l13 15V6z" fill="#9a9a9a" /><path d="M3 3l19 19" stroke="#9a9a9a" strokeWidth="2" /></svg></Tool>
        </Toolbar>
        <TrackPanel>
          <TrackEdge>1<svg width="9" height="8" viewBox="0 0 9 8"><path d="M0 0h4l1 2h4v6H0z" fill="#67736e" /></svg></TrackEdge>
          <TrackMain>
            <TrackBar>
              <NamePill><RecDot $s={22} /><NameText>Process</NameText><Knob $s={21} /></NamePill>
              <Mini $w={20} $h={21} $ml={7} $c="#e0605a">M</Mini><Mini $w={19} $h={21} $c="#d3c84a">S</Mini>
              <Mini $w={19} $h={21} $ml={6} $bg="#1f7d5f" $c="#c9efdf" $fs={11.5}>FX</Mini><Mini $w={17} $h={21} $bg="#3fc594" $c="#0d5b40"><Power /></Mini>
              <Mini $w={40} $h={21} $ml={6} $bg="linear-gradient(#a4a9a6,#7e8481)" $c="#2b2b2b" $fs={9}><Envelope s={13} />TRIM</Mini>
            </TrackBar>
            <ParamRow><ParamKnob /><ParamLabel>receiver_cool<br />-1.827</ParamLabel></ParamRow>
            <SendDots><SendDot /><SendDot /><SendDot /></SendDots>
          </TrackMain>
          <SpartaTag>sparta_mul</SpartaTag>
        </TrackPanel>
      </TcpColumn>
      <Arrange>
        <MarkerLane><Marker>3</Marker></MarkerLane>
        <Ruler>{marks.map(([b, t]) => <RulerMark key={b}><BarNo>{b}</BarNo><BarTime>{t}</BarTime></RulerMark>)}</Ruler>
        <GridArea>
          <MediaItem>
            <ItemLabel><Knob $s={16} /><ItemTag>M</ItemTag><ItemTag>FX</ItemTag><ItemName>[-15.0dB] noise_1000sec.wav</ItemName></ItemLabel>
            <Wave $top /><WaveGap /><Wave />
          </MediaItem>
        </GridArea>
        <PlayLine />
        <EditCursor />
        <VScroll><ArrowBtn $rot={0} $mt={4} /><VThumb /><ArrowBtn $rot={180} /><PlusMinus $plus $mt={5} /><PlusMinus $mt={14} /></VScroll>
      </Arrange>
    </RTop>
    <RBottom>
      <MixSide>
        <FocusedFx>Process [FX] sparta_multi6DoFconv</FocusedFx>
        <Transport>
          <BtnGroup>
            <TBtn $s={25}><svg width="10" height="10" viewBox="0 0 10 10" fill="#999"><path d="M0 0h2.500v10H0zM10 0v10L3 5z" /></svg></TBtn>
            <TBtn $s={25}><svg width="10" height="10" viewBox="0 0 10 10" fill="#999"><path d="M7.500 0H10v10H7.500zM0 0v10l7-5z" /></svg></TBtn>
          </BtnGroup>
          <TBtnGap />
          <RecDot $s={29} />
          <TBtn $s={29} $bg="linear-gradient(#cfd6d3 50%,#b9a3ad)"><svg width="11" height="12" viewBox="0 0 11 12"><path d="M1 0l10 6-10 6z" fill="#222" /></svg></TBtn>
          <TBtn $s={23} $bg="#12a978"><svg width="14" height="14" viewBox="0 0 14 14" fill="none" stroke="#fff" strokeWidth="2"><path d="M5 12A5 5 0 0 1 4 3M9 2a5 5 0 0 1 1 9M4 0v3.500H1M10 14v-3.500h3" /></svg></TBtn>
          <TBtnGap />
          <BtnGroup>
            <TBtn $s={25}><svg width="9" height="9" viewBox="0 0 9 9"><path d="M0 0h9v9H0z" fill="#999" /></svg></TBtn>
            <TBtn $s={25}><svg width="9" height="9" viewBox="0 0 9 9"><path d="M0 0h3v9H0zM6 0h3v9H6z" fill="#999" /></svg></TBtn>
          </BtnGroup>
          <BigTime>25.1.00 / 0:48.000</BigTime>
          <Stopped>[Stopped]</Stopped>
        </Transport>
        <Mixer>
          <MasterStrip>
            <MasterPan>center<Knob $s={19} /></MasterPan>
            <MeterPanel>
              <DbRow>0.00dB</DbRow>
              <MeterCols>
                <MeterMain>
                  <MeterHead><InfRow><span>-inf</span><span>-inf</span></InfRow></MeterHead>
                  <Scales>
                    <ScaleCol $align="left">{vols.map((v) => <div key={v}>{v}</div>)}</ScaleCol>
                    <ScaleCol $align="center" $mt={14}>{mids.map((v) => <div key={v}>{v}</div>)}</ScaleCol>
                    <ScaleCol $align="right">{volsR.map((v) => <div key={v}>{v}</div>)}</ScaleCol>
                  </Scales>
                </MeterMain>
                <FaderSlot $h={262} $cap={60} $mt={8}><FaderCap /></FaderSlot>
              </MeterCols>
              <RmsRow><InfRow $green><b>RMS</b><span>-inf</span></InfRow></RmsRow>
              <MasterName>MASTER</MasterName>
            </MeterPanel>
          </MasterStrip>
          <BtnColumn $w={32} $pt={7}>
            <Mini $w={19} $h={19} $bg="#7a7a7a" $c="#333"><svg width="14" height="9" viewBox="0 0 14 9" fill="none" stroke="#333"><circle cx="4.800" cy="4.500" r="4" /><circle cx="9.200" cy="4.500" r="4" /></svg></Mini>
            <TinyLabel>MONO</TinyLabel>
            <Mini $w={19} $h={19} $c="#e0605a">M</Mini><Mini $w={19} $h={19} $c="#d3c84a">S</Mini>
            <Mini $w={19} $h={19} $mt={6}><Route /></Mini>
            <TinyLabel>ROUTE</TinyLabel>
            <Mini $w={19} $h={19} $bg="#4a4a4a" $c="#e0e0e0" $mt={1} $fs={11.5}>FX</Mini><Mini $w={19} $h={16} $bg="#858585" $c="#222"><Power /></Mini>
            <Mini $w={19} $h={19} $bg="#808080" $c="#2b2b2b" $mt={6}><Envelope s={13} /></Mini>
            <TinyLabel>TRIM</TinyLabel>
            <Mini $w={19} $h={19} $c="#e0e0e0"><b>i</b></Mini>
          </BtnColumn>
          <TrackStrip>
            <StripTop>
              <InSelect $w={104}>Input 1</InSelect>
              <StripRow $h={20} $mt={4}><InSelect $w={39}>in</InSelect><Mini $w={19} $h={19} $ml={46} $bg="#8d9793" $c="#1d1d1d"><InFx>IN<br />FX</InFx></Mini></StripRow>
              <StripRow $mt={3} $ml={42}><Knob $s={20} /></StripRow>
            </StripTop>
            <StripBody>
              <InfCell>-inf</InfCell>
              <FaderSlot $h={186} $cap={38} $ml={15} $mt={15}><FaderCap /></FaderSlot>
              <BtnColumn $w={38} $pt={7}>
                <Mini $w={19} $h={19} $c="#e0605a">M</Mini><Mini $w={19} $h={19} $c="#d3c84a">S</Mini>
                <Mini $w={19} $h={19} $mt={8}><Route dim /></Mini>
                <Mini $w={19} $h={19} $bg="#25805f" $c="#bfeeda" $mt={9} $fs={11.5}>FX</Mini><Mini $w={19} $h={16} $bg="#3fc594" $c="#0d5b40"><Power /></Mini>
                <Mini $w={19} $h={19} $bg="#808080" $c="#2b2b2b" $mt={7}><Envelope s={13} /></Mini>
                <Phase>ø</Phase>
              </BtnColumn>
            </StripBody>
            <StripFoot><svg width="12" height="14" viewBox="0 0 12 14"><path d="M1 4h4l5-4v14l-5-4H1z" fill="#8d8d8d" /></svg><RecDot $s={21} /></StripFoot>
            <StripName>Process</StripName>
            <StripNo>1</StripNo>
          </TrackStrip>
        </Mixer>
      </MixSide>
      <RightTransport>
        <HScrollRow><ArrowBtn $rot={-90} $ml={1} /><PushRight /><ArrowBtn $rot={90} /><PlusMinus $plus $ml={9} /><PlusMinus $ml={15} /></HScrollRow>
        <RateRow>
          <Plate $w={80}><PlateSig>4/4</PlateSig></Plate>
          <Plate $w={59}>BPM<br />120</Plate>
          <Plate $w={58}><PlateTiny><Envelope s={11} />GLOBAL</PlateTiny><OffPill>OFF</OffPill></Plate>
          <RateKnob />
          <RateText>Rate:<br />1.0</RateText>
        </RateRow>
      </RightTransport>
    </RBottom>
    <TabBar>!
      <DockTab $w={76} $on><XBox /><b>Mixer</b></DockTab>
      <DockTab $w={112}><XBox />Performance</DockTab>
      <DockTab $w={122}><XBox />Routing Matrix</DockTab>
    </TabBar>
    <Bar>
      {apps}
      <Tray>
        <TrayItem $w={30}><svg width="17" height="10" viewBox="0 0 17 10" fill="none" stroke="#fff" strokeWidth="1.500"><path d="M1 9l7.500-7.500L16 9" /></svg></TrayItem>
        <TrayItem $w={30}><svg width="19" height="19" viewBox="0 0 19 19" fill="#fff"><g fill="#666"><circle cx="3" cy="3" r="2" /><circle cx="9.500" cy="3" r="2" /><circle cx="16" cy="3" r="2" /><circle cx="3" cy="16" r="2" /><circle cx="16" cy="16" r="2" /></g><circle cx="3" cy="9.500" r="2" /><circle cx="9.500" cy="9.500" r="2" /><circle cx="16" cy="9.500" r="2" /><circle cx="9.500" cy="16" r="2" /></svg></TrayItem>
        <TrayItem $w={30}><svg width="16" height="20" viewBox="0 0 16 20"><rect width="16" height="20" rx="7" fill="#0a7bf0" /><path d="M4.500 6.500l7 6.500L8 16V4l3.500 3-7 6.500" fill="none" stroke="#fff" strokeWidth="1.300" /></svg></TrayItem>
        <TrayItem $w={30}><svg width="21" height="14" viewBox="0 0 21 14"><path d="M5 4h14v9H5z" fill="#fff" /><path d="M19 6.500h1.500v4H19zM1 1v3.500c0 2 3 2 3 0V1M2.500 6v7H5" stroke="#fff" fill="none" strokeWidth="1.200" /></svg></TrayItem>
        <TrayItem $w={30}><svg width="20" height="16" viewBox="0 0 20 16" fill="none" stroke="#fff" strokeWidth="1.200"><path d="M1 5h3l4-3.500v13L4 11H1zM10.500 6c1 1 1 3 0 4" /><path d="M13.500 4c2 2 2 6 0 8M16.500 2c3 3 3 9 0 12" stroke="#666" /></svg></TrayItem>
        <TrayItem $w={31}><svg width="21" height="20" viewBox="0 0 21 20" fill="none" stroke="#fff" strokeWidth="1.400"><circle cx="10" cy="9.500" r="9" /><path d="M10 .5c-6 5-6 13 0 18M10 .5c3 3 4.500 6 4 9M1.500 6h17M1.500 13h10" /><circle cx="16" cy="15.500" r="4" fill="#101010" /><path d="M13.500 13l5 5" /></svg></TrayItem>
        <TrayItem $w={30}><svg width="21" height="20" viewBox="0 0 21 20" fill="none" stroke="#fff" strokeWidth="1.400"><path d="M1 3l19-2.500V12M1 3v15l12 .5" /><path d="M13 6.500a4.500 4.500 0 1 0 0 7M13.500 4v3h-3" /><circle cx="16" cy="15.500" r="4.500" fill="#ff9e1b" stroke="none" /></svg></TrayItem>
        <TrayItem $w={44}>ENG</TrayItem>
        <TrayItem $w={51}>09:46</TrayItem>
        <TrayItem $w={51}><svg width="21" height="20" viewBox="0 0 21 20"><path d="M0 0h20v15h-8l-5 4v-4H0z" fill="#fff" /><path d="M4 4h12M4 7.500h12M4 11h7" stroke="#101010" strokeWidth="1.300" /><path d="M17 10a4.500 4.500 0 1 1-5 5c3 1 5-1 5-5z" fill="#fff" stroke="#101010" /></svg></TrayItem>
        <ShowDesktop />
      </Tray>
    </Bar>
  </RightMonitor>
);

/* ---------- Win32 dialog parts ---------- */

const Win = styled.div<{ $x: number; $y: number; $w: number; $h: number }>`
  position: absolute;
  left: ${(p) => p.$x}px;
  top: ${(p) => p.$y}px;
  width: ${(p) => p.$w}px;
  height: ${(p) => p.$h}px;
  overflow: hidden;
  background: #f0f0f0;
  color: #000;
  box-shadow: 0 3px 16px rgba(0, 0, 0, 0.5), 0 0 0 1px rgba(70, 70, 70, 0.7);
  font-family: "Liberation Sans", Arial, sans-serif;
  font-size: 13.1px;
`;
const DlgTitle = styled.div<{ $h: number; $c: string; $pl: number }>`
  display: flex;
  align-items: center;
  height: ${(p) => p.$h}px;
  padding-left: ${(p) => p.$pl}px;
  background: #fff;
  color: ${(p) => p.$c};
  font-family: "Open Sans", sans-serif;
  font-size: 14.4px;
`;
const DlgTitleText = styled.div`margin-left: 5px; white-space: pre;`;
const Row = styled.div<Box & { $top?: boolean }>`
  ${box}
  display: flex;
  align-items: ${(p) => (p.$top ? "flex-start" : "center")};
`;
const Lbl = styled.div<Box & { $dim?: boolean; $fs?: number }>`
  ${box}
  color: ${(p) => (p.$dim ? "#8a8a8a" : "#000")};
  ${(p) => p.$fs && `font-size: ${p.$fs}px;`}
`;
const Right = styled.div<Box & { $dim?: boolean }>`
  ${box}
  text-align: right;
  color: ${(p) => (p.$dim ? "#8a8a8a" : "#000")};
`;
const Btn = styled.div<Box & { $off?: boolean }>`
  ${box}
  display: flex;
  align-items: center;
  justify-content: center;
  border: 1px solid ${(p) => (p.$off ? "#bfbfbf" : "#adadad")};
  background: ${(p) => (p.$off ? "#cccccc" : "#e1e1e1")};
  color: ${(p) => (p.$off ? "#8a8a8a" : "#000")};
`;
const SelectBox = styled.div<Box>`
  ${box}
  display: flex;
  align-items: center;
  justify-content: space-between;
  padding: 0 4px;
  border: 1px solid #adadad;
  background: #e1e1e1;
`;
const Select = ({ children, ...p }: { children?: React.ReactNode; $w: number; $h: number; $ml?: number }) => (
  <SelectBox {...p}><span>{children}</span><Chevron c="#555" w={11} sw={1.100} /></SelectBox>
);
const Field = styled.div<Box & { $off?: boolean; $right?: boolean; $fs?: number }>`
  ${box}
  display: flex;
  align-items: center;
  justify-content: ${(p) => (p.$right ? "flex-end" : "flex-start")};
  padding: 0 2px;
  border: 1px solid ${(p) => (p.$off ? "#c9c9c9" : "#7a7a7a")};
  background: ${(p) => (p.$off ? "#f0f0f0" : "#fff")};
  color: ${(p) => (p.$off ? "#7d7d7d" : "#000")};
  ${(p) => p.$fs && `font-size: ${p.$fs}px;`}
`;
const Check = styled.div<Box & { $off?: boolean }>`
  ${box}
  width: 16px;
  height: 16px;
  display: flex;
  align-items: center;
  justify-content: center;
  border: 1px solid ${(p) => (p.$off ? "#cfcfcf" : "#333")};
  background: #fff;
`;
const Tick = () => (
  <svg width="11" height="10" viewBox="0 0 11 10" fill="none" stroke="#111" strokeWidth="1.300"><path d="M1 5l3 3.500L10 1" /></svg>
);
const Group = styled.div<Box>`
  ${box}
  border: 1px solid #dcdcdc;
`;
const GroupTitle = styled.div`
  width: max-content;
  height: 16px;
  margin: -8px 0 0 6px;
  padding: 0 2px;
  background: #f0f0f0;
  line-height: 17px;
`;

/* ---------- FX parameter window, mostly covered ---------- */

const ParamWindow = () => (
  <Win $x={2269.5} $y={700} $w={436} $h={235}>
    <Row $mt={209} $ml={17} $h={16}><Check /><Lbl $ml={3}>Link from MIDI or FX parameter</Lbl></Row>
  </Win>
);

/* ---------- plugin window ---------- */

const FxTitle = styled.div`
  display: flex;
  align-items: flex-start;
  justify-content: flex-end;
  height: 61px;
  padding: 8px 2px 0 0;
  background: #fff;
  gap: 39px;
`;
const FxClose = styled.div`
  width: 25px;
  height: 25px;
  background: #e6e6e6;
`;
const KnobSpot = styled.div`margin-left: 6px;`;
const FxNote = styled.div`
  width: 280px;
  padding: 606px 0 0 4px;
`;
const FxMain = styled.div`
  display: flex;
  margin-top: 2.5px;
`;
const Plugin = styled.div`
  width: 1074px;
  height: 623.5px;
  border: 3px solid #8d999e;
  background: linear-gradient(#1b3646 6%, #12262f 25%, #03110f 52%, #03151a 70%, #1b3a4e);
  color: #fff;
  font-family: "DejaVu Sans", Verdana, sans-serif;
  font-size: 15.1px;
`;
const PlHead = styled.div`
  display: flex;
  align-items: center;
  height: 39px;
  border-bottom: 2px solid #b4bfc3;
  border-radius: 0 0 5px 5px;
  background: linear-gradient(#0b1d26, #1b3a4b);
`;
const Purple = styled.div`
  width: 278px;
  text-align: right;
  color: #9212ff;
  font-size: 19.5px;
  font-weight: bold;
  letter-spacing: -0.8px;
`;
const PlTag = styled.div`
  width: 337px;
  margin-left: 18px;
  font-size: 12.37px;
`;
const PlVer = styled.div`
  margin-top: 13px;
  font-size: 11.56px;
`;
const PlBody = styled.div`
  display: flex;
`;
const PlLeft = styled.div`
  width: 489px;
  margin-left: 7px;
`;
const PlRight = styled.div`
  width: 549px;
  margin-left: 10.5px;
`;
const Panel = styled.div<Box>`
  ${box}
  border: 1px solid #4a5d64;
  background: rgba(18, 28, 31, 0.8);
`;
const Head = styled.div<Box>`
  ${box}
  display: flex;
  align-items: center;
  font-weight: bold;
`;
const HeadEnd = styled.div<{ $w: number }>`
  width: ${(p) => p.$w}px;
  text-align: right;
`;
const LoadedLine = styled.div`
  height: 31.5px;
  width: 252px;
  padding-top: 15px;
  text-align: right;
  font-size: 11.56px;
`;
const PathRow = styled.div`
  display: flex;
  align-items: center;
  height: 34px;
  border-bottom: 1px solid #4a5d64;
`;
const PathCombo = styled.div`
  display: flex;
  align-items: center;
  justify-content: flex-end;
  width: 444px;
  height: 25px;
  padding-right: 15px;
  gap: 15px;
  border: 1px solid #7f8d93;
  border-radius: 3px;
  background: #11191d;
  font-family: "DejaVu Sans Condensed", "DejaVu Sans", sans-serif;
  font-size: 13.6px;
  font-stretch: condensed;
`;
const Dots = styled.div`
  width: 37px;
  height: 25px;
  border: 1px solid #e0e4e6;
  border-radius: 0 12px 12px 0;
  background: #11191d;
  text-align: center;
  line-height: 20px;
  font-size: 13px;
`;
const InfoRow = styled.div`
  display: flex;
  align-items: center;
  height: 27.5px;
`;
const StubCell = styled.div`
  width: 233px;
  height: 25px;
  border: 1px solid #34464d;
`;
const InfoLabel = styled.div`
  width: 163.5px;
  margin-left: 9px;
  font-weight: bold;
`;
const InfoValue = styled.div<{ $combo?: boolean; $dim?: boolean }>`
  display: flex;
  align-items: center;
  justify-content: space-between;
  width: 75px;
  height: 25px;
  padding: 0 3px 0 6px;
  border: 1px solid ${(p) => (p.$combo ? "#8a979c" : "#43555c")};
  border-radius: ${(p) => (p.$combo ? 3 : 0)}px;
  background: ${(p) => (p.$combo ? (p.$dim ? "#0a1114" : "#1c292e") : "#131d21")};
  color: ${(p) => (p.$dim ? "#555f63" : "#fff")};
  font-size: ${(p) => (p.$combo ? 12.4 : 15.1)}px;
`;
const PartPanel = styled.div`
  width: 252px;
  height: 61px;
  margin-left: 236px;
  padding-top: 3px;
  border: 1px solid #4a5d64;
`;
const PartRow = styled.div`
  display: flex;
  align-items: center;
  height: 27.5px;
  ${InfoLabel} { margin-left: 5px; }
`;
const PosCol = styled.div<{ $w: number; $line?: boolean; $pl?: number }>`
  display: flex;
  flex-direction: column;
  align-items: center;
  width: ${(p) => p.$w}px;
  padding-left: ${(p) => p.$pl ?? 0}px;
  border-left: ${(p) => (p.$line ? "1px solid #6f8087" : "none")};
  font-weight: bold;
  line-height: 24px;
`;
const PosLead = styled.div<{ $mt: number }>`
  display: flex;
  justify-content: flex-end;
  width: 236px;
  padding-top: ${(p) => p.$mt}px;
`;
const PosVal = styled.div<{ $w: number; $mt?: number; $kind?: "dim" | "lit" | "left" | "right" }>`
  width: ${(p) => p.$w}px;
  height: 25px;
  margin-top: ${(p) => p.$mt ?? 5}px;
  padding: 0 6px;
  border: 1px solid #5c6d74;
  background: ${(p) => (p.$kind === "lit" ? "#43575f" : "#172125")};
  color: ${(p) => (p.$kind === "dim" || p.$kind === "lit" ? "#8e999d" : "#fff")};
  text-align: ${(p) => (p.$kind === "left" || p.$kind === "right" ? p.$kind : "center")};
  font-weight: normal;
  line-height: 23px;
`;
const LongVal = styled.div`
  width: 413px;
  height: 24px;
  margin-top: 3px;
  padding-left: 205px;
  border: 1px solid #5c6d74;
  text-align: center;
  color: #8e999d;
  line-height: 22px;
`;
const RotCols = styled.div`
  display: flex;
  padding-left: 239px;
  gap: 5.700px;
`;
const RotCol = styled.div`
  display: flex;
  flex-direction: column;
  align-items: center;
  width: 73px;
`;
const RotName = styled.div`
  display: flex;
  justify-content: space-between;
  width: 71px;
  height: 26px;
  padding-top: 7px;
  font: 11.3px/16px "DejaVu Sans Condensed", "DejaVu Sans", sans-serif;
  font-stretch: condensed;
  b { font-size: 12px; }
`;
const RotVal = styled.div`
  width: 73px;
  height: 19px;
  margin-top: 2px;
  border: 1px solid #a7b3b8;
  text-align: center;
  line-height: 17px;
`;
const RotSign = styled.div`
  display: flex;
  align-items: center;
  gap: 5px;
  margin-top: 7px;
  font-weight: bold;
  font-size: 15px;
  &::after {
    content: "";
    width: 17px;
    height: 17px;
    border: 1.500px solid #687378;
    border-radius: 50%;
    background: #2b3336;
  }
`;
const CoordHead = styled.div`
  display: flex;
  align-items: center;
  height: 31.5px;
  padding: 5px 0 0 178px;
  font-size: 15.5px;
  font-weight: bold;
`;
const SideView = styled.div`
  display: flex;
  align-items: center;
  justify-content: space-between;
  width: 115px;
  height: 21px;
  margin: -7px 0 0 76px;
  padding: 0 15px 0 7px;
  border: 1px solid #a3afb4;
  border-radius: 3px;
  background: #11191d;
  font-size: 13.2px;
  font-weight: normal;
`;
const SectionBg = styled.div<Box>`
  ${box}
  border: 1px solid #4a5d64;
  background: linear-gradient(#10191c, #122327 75%, #1c3034 85%, #253a48);
`;
const PlGap = styled.div<{ $h: number }>`height: ${(p) => p.$h}px;`;

const gridX = Array.from({ length: 14 }, (_, i) => 25.6 * (i + 1));
const RotKnob = () => (
  <svg width="64" height="62" viewBox="-32 -31 64 62">
    <path d="M0 0L-17.500 25.500A31 31 0 0 1 0-30.500z" fill="#a9aeae" />
    <path d="M0 0L-17.500 25.500A31 31 0 1 1 17.500 25.500z" fill="none" stroke="#a9b1b3" strokeWidth="2" />
  </svg>
);

const FxWindow = () => (
  <Win $x={2865} $y={325.5} $w={1356.500} $h={753}>
    <FxTitle>
      <svg width="14" height="18" viewBox="0 0 14 18" fill="none" stroke="#9a9a9a" strokeWidth="1.200"><path d="M3 1h8M4.500 1v6L1.500 10.500h11L9.500 7V1M7 11v6" /></svg>
      <FxClose />
    </FxTitle>
    <Row $h={32} $mt={1}>
      <Field $w={1321} $h={24} $ml={2} /><Btn $w={22} $h={22} $ml={7.5}>...</Btn>
    </Row>
    <Row $h={30}>
      <Select $w={1054} $h={24} $ml={3.5} /><Btn $w={22} $h={22} $ml={7.5}>+</Btn><Btn $w={58} $h={22} $ml={6.5}>Param</Btn>
      <Btn $w={98} $h={22} $ml={5.5}>16/64 in+out</Btn><Btn $w={32} $h={22} $ml={6.5}>UI</Btn>
      <KnobSpot><Knob $s={23} /></KnobSpot><Check $ml={6}><Tick /></Check>
    </Row>
    <FxMain>
      <FxNote>0.0%c/0.0%c 0/0 spls</FxNote>
      <Plugin>
        <PlHead>
          <Purple>conv</Purple>
          <PlTag>6DoF Convolver with the MCFX convolution engine</PlTag>
          <PlVer>Ver 1.0.0alpha, Build Date Nov 21 2024 17:26:29</PlVer>
        </PlHead>
        <PlBody>
          <PlLeft>
            <LoadedLine>loaded</LoadedLine>
            <Panel $h={186}>
              <PathRow><PathCombo>hrtf-and-SOFA)\SOFA\creat...<Chevron c="#fff" w={17} sw={1.500} /></PathCombo><Dots>...</Dots></PathRow>
              <PlGap $h={5.5} />
              <InfoRow><StubCell /><InfoLabel>IR Length [s]:</InfoLabel><InfoValue>0.5</InfoValue></InfoRow>
              <InfoRow><StubCell /><InfoLabel>Filter Samplerate:</InfoLabel><InfoValue>48000</InfoValue></InfoRow>
              <InfoRow><StubCell /><InfoLabel>Host Samplerate:</InfoLabel><InfoValue>48000</InfoValue></InfoRow>
              <PlGap $h={2} />
              <PartPanel>
                <PartRow><InfoLabel>1st Partition Size:</InfoLabel><InfoValue $combo>1024<Chevron c="#fff" w={15} sw={1.200} /></InfoValue></PartRow>
                <PartRow><InfoLabel>Max Partition Size:</InfoLabel><InfoValue $combo $dim>8192<Chevron c="#fff" w={15} sw={1.200} /></InfoValue></PartRow>
              </PartPanel>
            </Panel>
            <PlGap $h={7.5} />
            <Panel $h={54.5}>
              <Row $top><PosLead $mt={24}><PosVal $w={60} $mt={0} /></PosLead><PosCol $w={76} $pl={5}>z<PosVal $w={61} $mt={0} $kind="dim">1.6</PosVal></PosCol></Row>
            </Panel>
            <Head $h={27}><HeadEnd $w={369}>Listener Position [m]</HeadEnd></Head>
            <Panel $h={59}>
              <Row $top>
                <PosLead $mt={29}><PosVal $w={60} $mt={0} $kind="right">7</PosVal></PosLead>
                <PosCol $w={76} $pl={5}>z<PosVal $w={61} $kind="lit">1.000</PosVal></PosCol>
                <PosCol $w={88} $line>Index<PosVal $w={61} $kind="left">0</PosVal></PosCol>
                <PosCol $w={87} $line>OSC Port<PosVal $w={53}>9000</PosVal></PosCol>
              </Row>
            </Panel>
            <PlGap $h={7} />
            <Panel $h={31}><LongVal>21.3</LongVal></Panel>
            <Head $h={25}><HeadEnd $w={428.500}>Field Rotation [degrees]</HeadEnd></Head>
            <Panel $h={143}>
              <RotCols>
                {["Yaw", "Pitch", "Roll"].map((n, i) => (
                  <RotCol key={n}>
                    <RotName><b>{n}</b><span>/ypr[{i}]</span></RotName>
                    <RotKnob />
                    <RotVal>0.00</RotVal>
                    <RotSign>+/-</RotSign>
                  </RotCol>
                ))}
              </RotCols>
            </Panel>
          </PlLeft>
          <PlRight>
            <CoordHead>Coordinate View [m]<SideView>Side View<Chevron c="#fff" w={17} sw={1.600} /></SideView></CoordHead>
            <SectionBg $h={542}>
              <svg width="545" height="120" viewBox="3655 526 545 120" fontFamily="DejaVu Sans" fontSize="12.5">
                <rect x="3667.500" y="541" width="383" height="44" fill="#182326" stroke="#d5d9da" strokeWidth="2" />
                {gridX.map((x, i) => <path key={i} d={`M${3667.5 + x} 542v42`} stroke={i === 4 || i === 9 ? "#6f7a7c" : "#354144"} />)}
                <path d="M3668 560h382" stroke="#354144" />
                <circle cx="3704" cy="566" r="7.500" fill="#173e3e" stroke="#2c5b5b" />
                <circle cx="3897" cy="566" r="7.500" fill="#173e3e" stroke="#2c5b5b" />
                <circle cx="3960.500" cy="560" r="6.500" fill="#f011f0" stroke="#f7a8f7" strokeWidth=".7" />
                <circle cx="4013.500" cy="566" r="6.500" fill="#f99d13" stroke="#fce0a8" strokeWidth=".7" />
                <circle cx="4088.500" cy="566" r="9" fill="#0b8a0b" stroke="#8fd08f" />
                <text x="4097" y="559.500" fill="#fff">0</text>
                <g fill="#8f9a9c" textAnchor="middle"><text x="3673" y="602">3.6</text><text x="3801" y="602">1.6</text><text x="3928" y="602">-0.4</text><text x="4057" y="602">-2.4</text><text x="4069" y="589">1.2</text><text x="3876" y="621" fontSize="13.5">Y</text></g>
              </svg>
            </SectionBg>
          </PlRight>
        </PlBody>
      </Plugin>
    </FxMain>
  </Win>
);

/* ---------- Render to File ---------- */

const TabPage = styled.div`
  width: 642px;
  height: 144px;
  border: 1.500px solid #fff;
  box-shadow: 0 0 0 1px #e3e3e3;
`;
const WavText = styled.span`padding-left: 147px;`;

const RenderDialog = () => (
  <Win $x={2704.5} $y={228} $w={672.5} $h={835}>
    <DlgTitle $h={31.5} $c="#999" $pl={3.5}><ReaperLogo s={20} /><DlgTitleText>Render to File</DlgTitleText><WinButtons $gap={0} $mr={14}><CloseIcon c="#888" /></WinButtons></DlgTitle>
    <Row $h={24} $mt={13.5}>
      <Lbl $ml={14.5} $w={56}>Source:</Lbl><Select $w={240} $h={24}>Master mix</Select>
      <Lbl $ml={8.5} $w={61.5}>Bounds:</Lbl><Select $w={190} $h={24}>Entire project</Select><Btn $w={80} $h={22} $ml={7.5}>Presets</Btn>
    </Row>
    <Group $w={644} $h={48.5} $ml={14.5} $mt={14}>
      <GroupTitle>Time bounds</GroupTitle>
      <Row $h={24} $mt={10}>
        <Lbl $dim $ml={8.5} $w={43}>Start:</Lbl><Field $off $w={80} $h={24}>0:00.000</Field>
        <Lbl $dim $ml={8} $w={39.5}>End:</Lbl><Field $off $w={84.5} $h={24}>5:00.000</Field>
        <Lbl $dim $ml={6} $w={55.500}>Length:</Lbl><Field $off $w={80} $h={24}>5:00.000</Field>
        <Check $ml={68} $mt={-5} /><Lbl $ml={4} $w={40.5} $mt={-3}>Tail:</Lbl><Field $off $w={62} $h={24} $mt={-6}>1000</Field><Lbl $ml={8} $mt={-4}>ms</Lbl>
      </Row>
    </Group>
    <Group $w={644} $h={109} $ml={14.5} $mt={13.5}>
      <GroupTitle>Output</GroupTitle>
      <Row $h={24} $mt={5.5}><Lbl $ml={14.5} $w={72}>Directory:</Lbl><Field $right $fs={13.6} $w={450} $h={24}>s\cimil\Develop\SPARTA\MEASURES\PAPER_PERF\Media\output\64spl</Field><Btn $w={86} $h={24} $ml={7}>Browse...</Btn></Row>
      <Row $h={24} $mt={8}><Field $w={450} $h={24} $ml={86.5} /><Btn $w={86} $h={24} $ml={7}>Wildcards</Btn></Row>
      <Row $h={24} $mt={8}><Field $right $w={450} $h={24} $ml={86.5} $fs={13.100}>5-01-21 09_46_00.wav</Field><Btn $off $w={86} $h={24} $ml={7}>1 file</Btn></Row>
    </Group>
    <Group $w={644} $h={234} $ml={14.5} $mt={13}>
      <Row $h={24} $mt={13}><Select $w={150} $h={24} $ml={260} /><Select $w={170} $h={24} $ml={51}>Full-speed Offline</Select></Row>
      <Row $h={16} $mt={13.5}><Check $ml={408} /><Lbl $ml={3}>2nd pass render</Lbl></Row>
      <Row $h={24} $mt={10}><Select $w={150} $h={24} $ml={299} /><Btn $w={168} $h={24} $ml={13}>Normalize/Limit/Fade</Btn></Row>
      <Row $h={16} $mt={9.5}><Right $w={419}>er</Right><Check $off $ml={62} /><Lbl $dim $ml={3}>Dither stems</Lbl></Row>
      <Row $h={16} $mt={6}><Right $w={461}>e master</Right><Check $off $ml={20} /><Lbl $dim $ml={3}>Noise shape stems</Lbl></Row>
      <Row $h={16} $mt={10}><Right $dim $w={524}>ped stretch markers</Right></Row>
      <Row $h={16} $mt={5}><Right $dim $w={511.5}>ped take markers</Right></Row>
      <Row $h={24} $mt={8}><Right $w={498}>d new metadata</Right><Btn $off $w={94} $h={24} $ml={38}>Metadata...</Btn></Row>
    </Group>
    <Row $mt={29} $ml={14.5}>
      <TabPage>
        <Row $h={24} $mt={10}><Select $w={250} $h={24} $ml={248} /></Row>
        <Row $h={24} $mt={8}><Select $w={286} $h={24} $ml={248}><WavText>WAV/RF64</WavText></Select></Row>
        <Row $h={16} $mt={11}><Right $w={444}>F data</Right></Row>
        <Row $h={16} $mt={10}><Right $w={418}>po</Right></Row>
      </TabPage>
    </Row>
    <Row $h={16} $mt={14.5}><Check $ml={14.5} /><Lbl $ml={3} $w={324}>Silently increment filenames to avoid overwriting</Lbl><Check /><Lbl $ml={3}>Add rendered items to new tracks in project</Lbl></Row>
    <Row $h={16} $mt={8}><Check $ml={14.5}><Tick /></Check><Lbl $ml={3} $w={324}>Do not render files that are likely silent</Lbl><Check /><Lbl $ml={3}>Save copy of project to outfile.wav.RPP</Lbl></Row>
    <Row $h={16} $mt={7}><Check $ml={357.5} /><Lbl $ml={3}>Save outfile.render_stats.html</Lbl></Row>
    <Row $h={26} $mt={11}><Btn $w={158} $h={26} $ml={13.5}>Queued Renders...</Btn><Btn $w={158} $h={26} $ml={160.5}>Dry Run (no output)</Btn><Btn $w={158} $h={26} $ml={10}>Render 1 file</Btn></Row>
    <Row $h={26} $mt={10}><Btn $w={84} $h={26} $ml={445.500}>Cancel</Btn><Btn $off $w={118} $h={26} $ml={10.5}>Save Settings</Btn></Row>
  </Win>
);

/* ---------- render progress ---------- */

const ProgressBar = styled.div`
  width: 810px;
  height: 16px;
  margin: 10px 0 0 26px;
  background: #06b025;
  border: 1px solid #bcbcbc;
`;
const OutField = styled.div`
  width: 827px;
  height: 24px;
  margin: 6px 0 0 11px;
  padding: 3px 2px;
  border: 1.500px solid #2481bd;
  background: #f0f0f0;
`;
const Selected = styled.span`
  display: inline-block;
  height: 16.5px;
  background: #0078d7;
  color: #fff;
  line-height: 17px;
`;
const CenterText = styled.div<{ $mt: number }>`
  width: 849px;
  margin-top: ${(p) => p.$mt}px;
  height: 18px;
  line-height: 18px;
  text-align: center;
  white-space: pre;
  font-size: 12.7px;
`;
const Meters = styled.div`
  display: grid;
  width: 662px;
  height: 160px;
  margin-left: 8px;
  overflow: hidden;
  background: linear-gradient(90deg, #004a4b 0, #00524a 40%, #005844 60%, #006437 80%, #006a35 603px, #4a0d00 603px);
`;
const MeterRows = styled.div`
  grid-area: 1 / 1;
  color: #fff;
  font-size: 12px;
`;
const MeterRow = styled.div`
  display: flex;
  height: 10px;
  margin-left: -8.7px;
  line-height: 11px;
`;
const Db = styled.div<{ $o: number }>`
  width: 58.400px;
  text-align: center;
  color: rgba(225, 245, 235, ${(p) => p.$o});
`;
const Peak = styled.div`
  width: 82.5px;
  text-align: right;
  font-size: 12.8px;
`;
const PeakMarks = styled.svg`grid-area: 1 / 1;`;

const peaks = [-16.5, -22.2, -24.4, -18.7, -21.6, -26.4, -23.9, -24.7, -21.9, -21.5, -25.5, -27.2, -26.8, -24.3, -26.7, -23.8];
const rms = [null, 381, 350, 416, 384, 337, 361, 363, 388, 379, 350, 309, 340, 370, 337, 372];
const steps = [-60, -54, -48, -42, -36, -30, -24, -18, -12, -6];

const ProgressDialog = () => (
  <Win $x={2237} $y={423.5} $w={891} $h={493.5}>
    <DlgTitle $h={37.5} $c="#000" $pl={9}><ReaperLogo s={20} /><DlgTitleText>{"Finished in 0:12   (24.2x realtime)"}</DlgTitleText><WinButtons $gap={45} $mr={23}><MinIcon c="#000" /><MaxIcon c="#ccc" /><CloseIcon c="#000" /></WinButtons></DlgTitle>
    <Group $w={862} $h={77} $ml={14.5} $mt={22}>
      <GroupTitle>Output file</GroupTitle>
      <OutField><Selected>Dry run, no output</Selected></OutField>
      <CenterText $mt={7}>Dry run: 48000Hz, 16ch</CenterText>
    </Group>
    <Group $w={862} $h={247} $ml={14.5} $mt={19}>
      <GroupTitle>Render status</GroupTitle>
      <ProgressBar />
      <CenterText $mt={12}>{"Finished in 0:12   (24.2x realtime)"}</CenterText>
      <Row $mt={10}>
        <Right $w={182}>Master mix</Right>
        <Meters>
          <MeterRows>
            {peaks.map((p, i) => (
              <MeterRow key={i}>
                {steps.map((s, k) => <Db key={s} $o={Math.min(1, 0.4 + k * 0.08)}>{s}</Db>)}
                <Peak>{p.toFixed(1)}</Peak>
              </MeterRow>
            ))}
          </MeterRows>
          <PeakMarks width="662" height="160">
            {rms.map((x, i) => x && <path key={i} d={`M${x} ${i * 10}v10`} stroke="#35d3a0" />)}
          </PeakMarks>
        </Meters>
      </Row>
    </Group>
    <Btn $w={126} $h={26} $ml={750} $mt={23}>Stats/Charts</Btn>
    <Btn $w={126} $h={26} $ml={750} $mt={6.5}>Close</Btn>
  </Win>
);

export default function App() {
  return (
    <>
      <Global />
      <Desktop>
        <Explorer />
        <Reaper />
        <ParamWindow />
        <FxWindow />
        <RenderDialog />
        <ProgressDialog />
      </Desktop>
    </>
  );
}
